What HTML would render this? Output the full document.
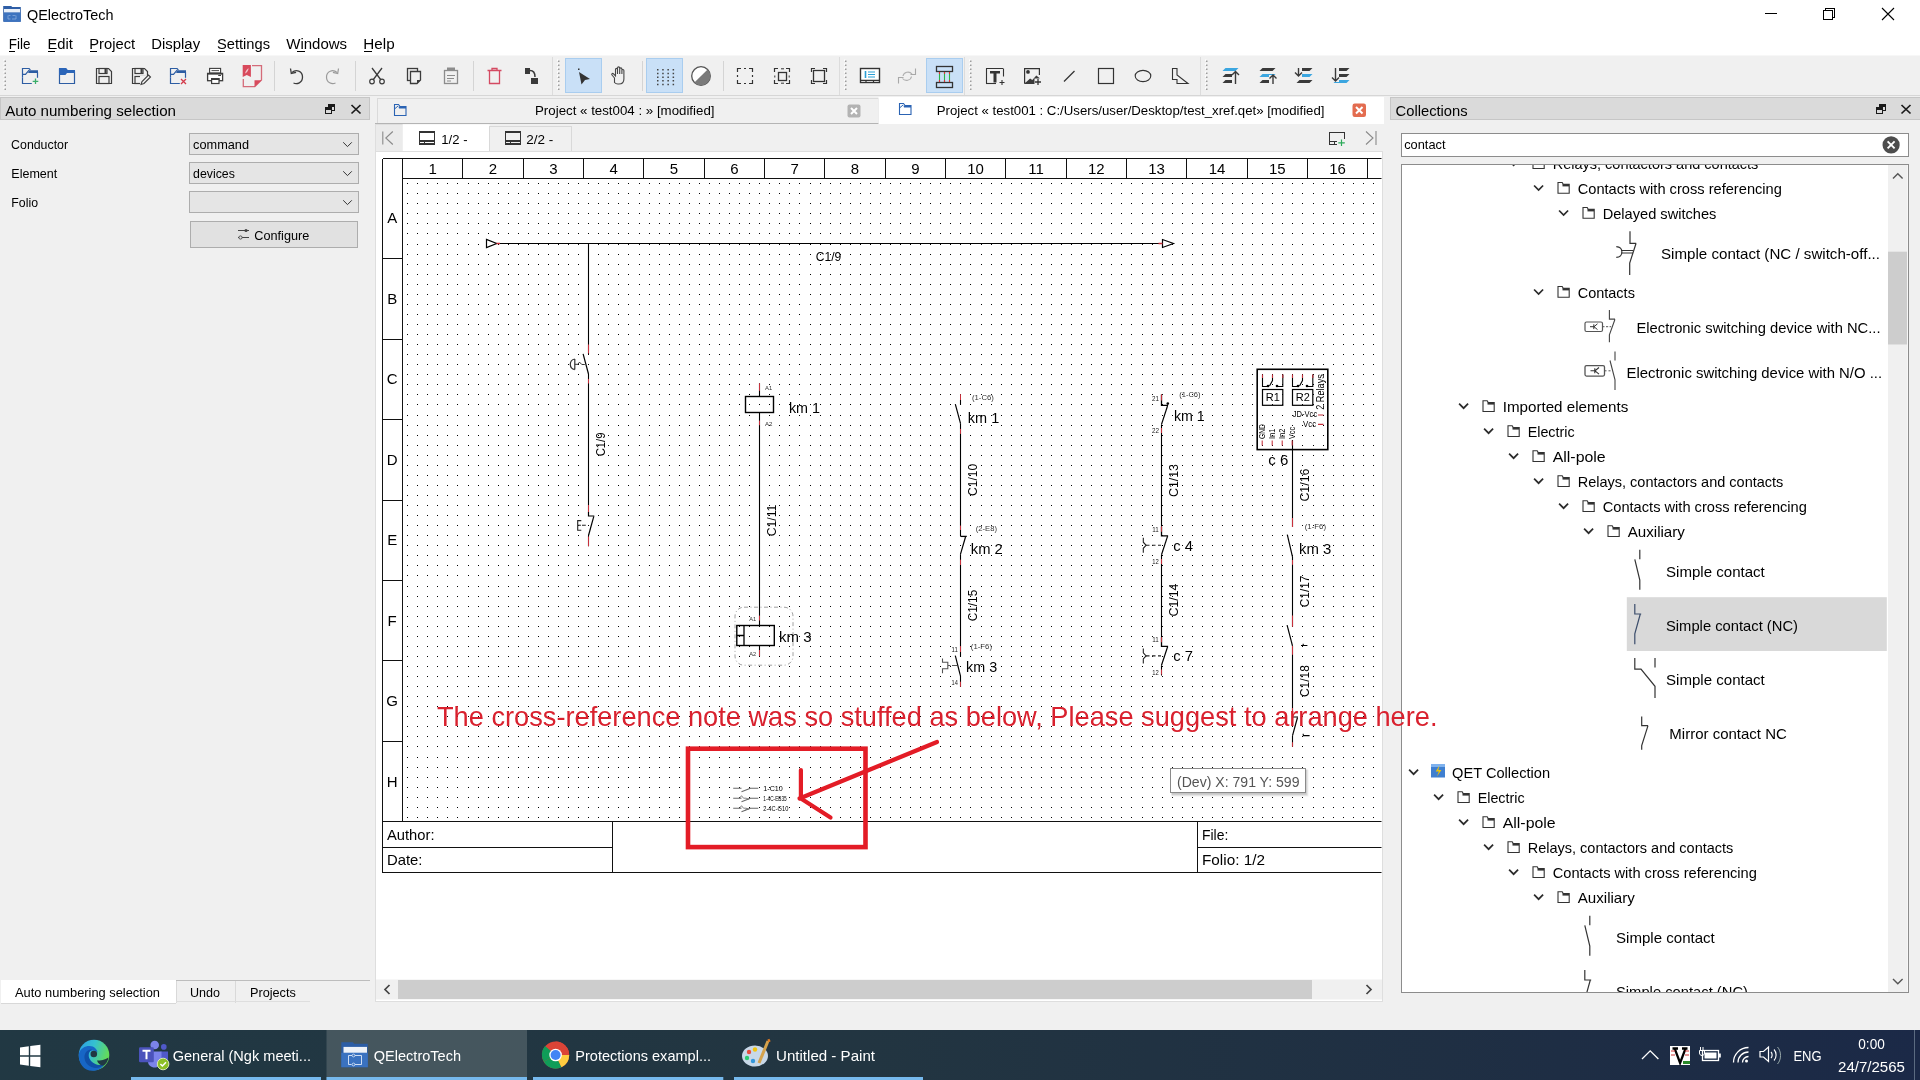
<!DOCTYPE html>
<html><head><meta charset="utf-8"><title>QElectroTech</title>
<style>
html,body{margin:0;padding:0;width:1920px;height:1080px;overflow:hidden;background:#f0f0f0;}
svg{display:block;font-family:"Liberation Sans",sans-serif;will-change:transform;}
.ce{shape-rendering:crispEdges}
</style></head><body>
<svg width="1920" height="1080" viewBox="0 0 1920 1080">
<rect x="0" y="0" width="1920" height="55" fill="#ffffff"/>
<path d="M3.2 21.8V6h8l1 1h8.6v14.8z" stroke="none" stroke-width="1" fill="#2e5ea6"/>
<rect x="4" y="9" width="16" height="3.6" fill="#e9eff8"/>
<rect x="4" y="12.6" width="16.6" height="9.2" fill="#3d73bf"/>
<path d="M8.5 15.5h2M12.5 15.5h3M8 15.5v3.5h2.5M12 19h4v-3.5" stroke="#8fb0e0" stroke-width="0.7" fill="none"/>
<text x="27" y="20" font-size="15" fill="#000" textLength="86.5" lengthAdjust="spacingAndGlyphs">QElectroTech</text>
<line x1="1765" y1="13.5" x2="1777" y2="13.5" stroke="#000" stroke-width="1" class="ce"/>
<rect x="1823.5" y="10.5" width="9" height="9" fill="none" stroke="#000" stroke-width="1" class="ce"/>
<path d="M1825.5 10.5v-2h9v9h-2" stroke="#000" stroke-width="1" fill="none" class="ce"/>
<path d="M1882 8l12 12M1894 8l-12 12" stroke="#000" stroke-width="1.1" fill="none"/>
<text x="8.7" y="49" font-size="15" fill="#000" textLength="21.7" lengthAdjust="spacingAndGlyphs">File</text>
<text x="47.4" y="49" font-size="15" fill="#000" textLength="25.4" lengthAdjust="spacingAndGlyphs">Edit</text>
<text x="89.3" y="49" font-size="15" fill="#000" textLength="45.8" lengthAdjust="spacingAndGlyphs">Project</text>
<text x="151.3" y="49" font-size="15" fill="#000" textLength="48.8" lengthAdjust="spacingAndGlyphs">Display</text>
<text x="217" y="49" font-size="15" fill="#000" textLength="53" lengthAdjust="spacingAndGlyphs">Settings</text>
<text x="286.3" y="49" font-size="15" fill="#000" textLength="60.8" lengthAdjust="spacingAndGlyphs">Windows</text>
<text x="363.3" y="49" font-size="15" fill="#000" textLength="31.3" lengthAdjust="spacingAndGlyphs">Help</text>
<line x1="8.5" y1="51.5" x2="15" y2="51.5" stroke="#000" stroke-width="1" class="ce"/>
<line x1="47.5" y1="51.5" x2="54.5" y2="51.5" stroke="#000" stroke-width="1" class="ce"/>
<line x1="89.5" y1="51.5" x2="96.5" y2="51.5" stroke="#000" stroke-width="1" class="ce"/>
<line x1="183.5" y1="51.5" x2="190" y2="51.5" stroke="#000" stroke-width="1" class="ce"/>
<line x1="217.5" y1="51.5" x2="224.5" y2="51.5" stroke="#000" stroke-width="1" class="ce"/>
<line x1="297" y1="51.5" x2="304.5" y2="51.5" stroke="#000" stroke-width="1" class="ce"/>
<line x1="363.5" y1="51.5" x2="371.5" y2="51.5" stroke="#000" stroke-width="1" class="ce"/>
<rect x="0" y="55" width="1920" height="41" fill="#f0f0f0"/>
<line x1="0" y1="55.5" x2="1920" y2="55.5" stroke="#f7f7f7" stroke-width="1" class="ce"/>
<line x1="0" y1="95.5" x2="1920" y2="95.5" stroke="#d6d6d6" stroke-width="1" class="ce"/>
<path d="M3.5 59.5h1.5v1.5h-1.5zM3.5 63.5h1.5v1.5h-1.5zM3.5 67.5h1.5v1.5h-1.5zM3.5 71.5h1.5v1.5h-1.5zM3.5 75.5h1.5v1.5h-1.5zM3.5 79.5h1.5v1.5h-1.5zM3.5 83.5h1.5v1.5h-1.5zM3.5 87.5h1.5v1.5h-1.5z" stroke="none" stroke-width="1" fill="#ffffff"/>
<path d="M4.5 60.5h1.5v1.5h-1.5zM4.5 64.5h1.5v1.5h-1.5zM4.5 68.5h1.5v1.5h-1.5zM4.5 72.5h1.5v1.5h-1.5zM4.5 76.5h1.5v1.5h-1.5zM4.5 80.5h1.5v1.5h-1.5zM4.5 84.5h1.5v1.5h-1.5zM4.5 88.5h1.5v1.5h-1.5z" stroke="none" stroke-width="1" fill="#9c9c9c"/>
<path d="M557.0 59.5h1.5v1.5h-1.5zM557.0 63.5h1.5v1.5h-1.5zM557.0 67.5h1.5v1.5h-1.5zM557.0 71.5h1.5v1.5h-1.5zM557.0 75.5h1.5v1.5h-1.5zM557.0 79.5h1.5v1.5h-1.5zM557.0 83.5h1.5v1.5h-1.5zM557.0 87.5h1.5v1.5h-1.5z" stroke="none" stroke-width="1" fill="#ffffff"/>
<path d="M558.0 60.5h1.5v1.5h-1.5zM558.0 64.5h1.5v1.5h-1.5zM558.0 68.5h1.5v1.5h-1.5zM558.0 72.5h1.5v1.5h-1.5zM558.0 76.5h1.5v1.5h-1.5zM558.0 80.5h1.5v1.5h-1.5zM558.0 84.5h1.5v1.5h-1.5zM558.0 88.5h1.5v1.5h-1.5z" stroke="none" stroke-width="1" fill="#9c9c9c"/>
<path d="M844.0 59.5h1.5v1.5h-1.5zM844.0 63.5h1.5v1.5h-1.5zM844.0 67.5h1.5v1.5h-1.5zM844.0 71.5h1.5v1.5h-1.5zM844.0 75.5h1.5v1.5h-1.5zM844.0 79.5h1.5v1.5h-1.5zM844.0 83.5h1.5v1.5h-1.5zM844.0 87.5h1.5v1.5h-1.5z" stroke="none" stroke-width="1" fill="#ffffff"/>
<path d="M845.0 60.5h1.5v1.5h-1.5zM845.0 64.5h1.5v1.5h-1.5zM845.0 68.5h1.5v1.5h-1.5zM845.0 72.5h1.5v1.5h-1.5zM845.0 76.5h1.5v1.5h-1.5zM845.0 80.5h1.5v1.5h-1.5zM845.0 84.5h1.5v1.5h-1.5zM845.0 88.5h1.5v1.5h-1.5z" stroke="none" stroke-width="1" fill="#9c9c9c"/>
<path d="M969.0 59.5h1.5v1.5h-1.5zM969.0 63.5h1.5v1.5h-1.5zM969.0 67.5h1.5v1.5h-1.5zM969.0 71.5h1.5v1.5h-1.5zM969.0 75.5h1.5v1.5h-1.5zM969.0 79.5h1.5v1.5h-1.5zM969.0 83.5h1.5v1.5h-1.5zM969.0 87.5h1.5v1.5h-1.5z" stroke="none" stroke-width="1" fill="#ffffff"/>
<path d="M970.0 60.5h1.5v1.5h-1.5zM970.0 64.5h1.5v1.5h-1.5zM970.0 68.5h1.5v1.5h-1.5zM970.0 72.5h1.5v1.5h-1.5zM970.0 76.5h1.5v1.5h-1.5zM970.0 80.5h1.5v1.5h-1.5zM970.0 84.5h1.5v1.5h-1.5zM970.0 88.5h1.5v1.5h-1.5z" stroke="none" stroke-width="1" fill="#9c9c9c"/>
<path d="M1205.0 59.5h1.5v1.5h-1.5zM1205.0 63.5h1.5v1.5h-1.5zM1205.0 67.5h1.5v1.5h-1.5zM1205.0 71.5h1.5v1.5h-1.5zM1205.0 75.5h1.5v1.5h-1.5zM1205.0 79.5h1.5v1.5h-1.5zM1205.0 83.5h1.5v1.5h-1.5zM1205.0 87.5h1.5v1.5h-1.5z" stroke="none" stroke-width="1" fill="#ffffff"/>
<path d="M1206.0 60.5h1.5v1.5h-1.5zM1206.0 64.5h1.5v1.5h-1.5zM1206.0 68.5h1.5v1.5h-1.5zM1206.0 72.5h1.5v1.5h-1.5zM1206.0 76.5h1.5v1.5h-1.5zM1206.0 80.5h1.5v1.5h-1.5zM1206.0 84.5h1.5v1.5h-1.5zM1206.0 88.5h1.5v1.5h-1.5z" stroke="none" stroke-width="1" fill="#9c9c9c"/>
<line x1="552.5" y1="57" x2="552.5" y2="95" stroke="#dcdcdc" stroke-width="1" class="ce"/>
<line x1="839.5" y1="57" x2="839.5" y2="95" stroke="#dcdcdc" stroke-width="1" class="ce"/>
<line x1="964.5" y1="57" x2="964.5" y2="95" stroke="#dcdcdc" stroke-width="1" class="ce"/>
<line x1="1200.5" y1="57" x2="1200.5" y2="95" stroke="#dcdcdc" stroke-width="1" class="ce"/>
<line x1="274.5" y1="61" x2="274.5" y2="91" stroke="#d4d4d4" stroke-width="1" class="ce"/>
<line x1="355.5" y1="61" x2="355.5" y2="91" stroke="#d4d4d4" stroke-width="1" class="ce"/>
<line x1="473.5" y1="61" x2="473.5" y2="91" stroke="#d4d4d4" stroke-width="1" class="ce"/>
<line x1="642.5" y1="61" x2="642.5" y2="91" stroke="#d4d4d4" stroke-width="1" class="ce"/>
<line x1="723.5" y1="61" x2="723.5" y2="91" stroke="#d4d4d4" stroke-width="1" class="ce"/>
<rect x="565.5" y="58.5" width="36" height="34" fill="#c9e0f7" stroke="#a9cdef" stroke-width="1" class="ce"/>
<rect x="646.5" y="58.5" width="36" height="34" fill="#c9e0f7" stroke="#a9cdef" stroke-width="1" class="ce"/>
<rect x="926.5" y="58.5" width="36" height="34" fill="#c9e0f7" stroke="#a9cdef" stroke-width="1" class="ce"/>
<path d="M22.5 77.8V83.5h9.3" stroke="#2d5da3" stroke-width="1.2" fill="none"/>
<path d="M22.5 77.8V68.5h6.6l1.3 1.6" stroke="#2d5da3" stroke-width="1.2" fill="none"/>
<path d="M22.5 74.4h3l3.6-4.2" stroke="#2d5da3" stroke-width="1.2" fill="none"/>
<path d="M29.5 70.2H38v2.7H28z" stroke="none" stroke-width="1" fill="#2d5da3"/>
<path d="M37.5 72v5.8" stroke="#2d5da3" stroke-width="1.2" fill="none"/>
<path d="M35.5 78.5v5.6M32.7 81.3h5.6" stroke="#3aae6a" stroke-width="1.3" fill="none"/>
<path d="M59.5 68.5V83.5h15V71.5" stroke="#2d5da3" stroke-width="1.2" fill="none"/>
<path d="M59 68h7.2l1.6 2.1H75v2.8H67l-1.6 2H59z" stroke="none" stroke-width="1" fill="#2b65b8"/>
<path d="M96.5 68.5h12l3 3v12h-15z" stroke="#3c3c3c" stroke-width="1.2" fill="none"/>
<rect x="99" y="68.5" width="8" height="5" fill="none" stroke="#3c3c3c" stroke-width="1.2"/>
<rect x="104.5" y="69" width="2" height="4" fill="#3c3c3c"/>
<rect x="99" y="76.5" width="10" height="7" fill="none" stroke="#3c3c3c" stroke-width="1.2"/>
<path d="M132.5 68.5h12l3 3v12h-15z" stroke="#3c3c3c" stroke-width="1.2" fill="none"/>
<rect x="135" y="68.5" width="8" height="5" fill="none" stroke="#3c3c3c" stroke-width="1.2"/>
<rect x="140.5" y="69" width="2" height="4" fill="#3c3c3c"/>
<rect x="135" y="76.5" width="10" height="7" fill="none" stroke="#3c3c3c" stroke-width="1.2"/>
<rect x="140" y="76" width="11" height="9" fill="#f0f0f0"/>
<path d="M141 84.5l1-3 6.5-6.5 2 2-6.5 6.5z" stroke="#3c3c3c" stroke-width="1.1" fill="#f0f0f0"/>
<path d="M170.5 77.8V83.5h9.3" stroke="#2d5da3" stroke-width="1.2" fill="none"/>
<path d="M170.5 77.8V68.5h6.6l1.3 1.6" stroke="#2d5da3" stroke-width="1.2" fill="none"/>
<path d="M170.5 74.4h3l3.6-4.2" stroke="#2d5da3" stroke-width="1.2" fill="none"/>
<path d="M177.5 70.2H186v2.7H176z" stroke="none" stroke-width="1" fill="#2d5da3"/>
<path d="M185.5 72v5.8" stroke="#2d5da3" stroke-width="1.2" fill="none"/>
<path d="M181 79l5 5M186 79l-5 5" stroke="#d33a4a" stroke-width="1.3" fill="none"/>
<rect x="209.6" y="68.4" width="11" height="4.6" fill="#fff" stroke="#3c3c3c" stroke-width="1.1"/>
<line x1="211.5" y1="70.6" x2="219" y2="70.6" stroke="#3c3c3c" stroke-width="0.9"/>
<rect x="207.6" y="73.4" width="15" height="7.3" fill="#fff" stroke="#3c3c3c" stroke-width="1.3"/>
<rect x="208" y="73" width="14" height="1.6" fill="#3c3c3c"/>
<rect x="218.2" y="75" width="2.8" height="1" fill="#3c3c3c"/>
<rect x="211.6" y="78.7" width="7.4" height="4.8" fill="#fff" stroke="#3c3c3c" stroke-width="1.2"/>
<rect x="211" y="78.2" width="8.5" height="1.8" fill="#3c3c3c"/>
<path d="M243.3 79v7.7h11.5l6.7-6.7V65.6h-9.5" stroke="#d46b79" stroke-width="1.3" fill="none"/>
<path d="M242.7 65h8.2v12.1l-4.1-2.1-4.1 2.1z" stroke="none" stroke-width="1" fill="#d84a5c"/>
<path d="M245 73.5c0.5-2.5 2-4.5 3.7-5.2-0.4 2.4-1.8 4.4-3.7 5.2z" stroke="none" stroke-width="1" fill="#f4c6cc"/>
<path d="M254.5 87V80.3h7z" stroke="none" stroke-width="1" fill="#d84a5c"/>
<path d="M292 72.5c4-3.5 10.5-1.5 10.5 4.5s-5.5 7.5-9 6" stroke="#3c3c3c" stroke-width="1.3" fill="none"/>
<path d="M290.5 68.5l0.8 5 4.8-1.2" stroke="#3c3c3c" stroke-width="1.3" fill="none"/>
<path d="M337 72.5c-4-3.5-10.5-1.5-10.5 4.5s5.5 7.5 9 6" stroke="#9a9a9a" stroke-width="1.2" fill="none"/>
<path d="M338.5 68.5l-0.8 5-4.8-1.2" stroke="#9a9a9a" stroke-width="1.2" fill="none"/>
<path d="M372 68l9 12M382 68l-9 12" stroke="#3c3c3c" stroke-width="1.3" fill="none"/>
<circle cx="372" cy="81.5" r="2.3" fill="none" stroke="#3c3c3c" stroke-width="1.2"/>
<circle cx="382" cy="81.5" r="2.3" fill="none" stroke="#3c3c3c" stroke-width="1.2"/>
<rect x="407.5" y="68.5" width="10" height="12" fill="none" stroke="#3c3c3c" stroke-width="1.3"/>
<path d="M410.5 71.5h10v8.5l-3.5 3.5h-6.5z" stroke="#3c3c3c" stroke-width="1.3" fill="#f0f0f0"/>
<path d="M417 83.5v-3.5h3.5z" stroke="none" stroke-width="1" fill="#3c3c3c"/>
<rect x="444.5" y="70.5" width="13" height="13" fill="none" stroke="#8c8c8c" stroke-width="1.3"/>
<rect x="447" y="67.5" width="8" height="3.5" fill="#8c8c8c"/>
<path d="M447 75.5h8M447 78.5h7M447 81h4" stroke="#8c8c8c" stroke-width="1" fill="none"/>
<path d="M487.5 70.5h14M492 70.5v-2h5v2M489.5 71v12.5h10V71" stroke="#d44a62" stroke-width="1.3" fill="none"/>
<rect x="525" y="68" width="5" height="6" fill="#3a3a3a"/>
<rect x="531" y="78" width="7" height="6" fill="#3a3a3a"/>
<path d="M530 70.5c3 0 5 2 5 6.5" stroke="#3a3a3a" stroke-width="1.5" fill="none"/>
<path d="M579 72l11 7-5 1-3.5 4.5z" stroke="none" stroke-width="1" fill="#333"/>
<rect x="578" y="68.5" width="1.5" height="1.5" fill="#333"/>
<path d="M614.5 78l-2.5-3c-0.8-1 0.5-2.2 1.5-1.2l2 2V69.5c0-1.5 2-1.5 2 0v4.5-6c0-1.5 2.2-1.5 2.2 0v6-5c0-1.5 2.2-1.5 2.2 0v5-3.5c0-1.4 2-1.4 2 0v8.5c0 3-2 5-5 5h-1c-1.6 0-2.5-0.5-3.4-1.5z" stroke="#444" stroke-width="1.1" fill="none"/>
<path d="M657.0 69.0h1.5v1.5h-1.5zM657.0 72.7h1.5v1.5h-1.5zM657.0 76.4h1.5v1.5h-1.5zM657.0 80.1h1.5v1.5h-1.5zM657.0 83.8h1.5v1.5h-1.5zM662.2 69.0h1.5v1.5h-1.5zM662.2 72.7h1.5v1.5h-1.5zM662.2 76.4h1.5v1.5h-1.5zM662.2 80.1h1.5v1.5h-1.5zM662.2 83.8h1.5v1.5h-1.5zM667.4 69.0h1.5v1.5h-1.5zM667.4 72.7h1.5v1.5h-1.5zM667.4 76.4h1.5v1.5h-1.5zM667.4 80.1h1.5v1.5h-1.5zM667.4 83.8h1.5v1.5h-1.5zM672.6 69.0h1.5v1.5h-1.5zM672.6 72.7h1.5v1.5h-1.5zM672.6 76.4h1.5v1.5h-1.5zM672.6 80.1h1.5v1.5h-1.5zM672.6 83.8h1.5v1.5h-1.5z" stroke="none" stroke-width="1" fill="#444"/>
<circle cx="701" cy="76" r="9.3" fill="#fff" stroke="#555" stroke-width="1.3"/>
<path d="M707.6 69.4A9.3 9.3 0 0 1 694.4 82.6z" stroke="none" stroke-width="1" fill="#7a7a7a"/>
<path d="M737.5 72V68.5h3.5M749 68.5h3.5v3.5M752.5 80v3.5h-3.5M741 83.5H737.5v-3.5" stroke="#333" stroke-width="1.2" fill="none"/>
<path d="M744 68.5h2M744 83.5h2M737.5 75h0v2M752.5 75v2" stroke="#333" stroke-width="1.2" fill="none"/>
<path d="M774.5 72V68.5h3.5M786 68.5h3.5v3.5M789.5 80v3.5h-3.5M778 83.5H774.5v-3.5" stroke="#333" stroke-width="1.2" fill="none"/>
<rect x="778.5" y="72.5" width="8" height="8" fill="none" stroke="#333" stroke-width="1.3"/>
<path d="M781 68.8h3M781 83.2h3M774.8 75.5v2M789.2 75.5v2" stroke="#333" stroke-width="1" fill="none"/>
<path d="M811.5 72V68.5h3.5M823 68.5h3.5v3.5M826.5 80v3.5h-3.5M815 83.5H811.5v-3.5" stroke="#333" stroke-width="1.2" fill="none"/>
<rect x="813.5" y="70.5" width="11" height="11" fill="none" stroke="#333" stroke-width="1.3"/>
<rect x="860.5" y="68.5" width="19" height="14" fill="#ffffff" stroke="#333" stroke-width="1.4"/>
<path d="M860.5 80.3h19M866 80.3v2.2M873.5 80.3v2.2" stroke="#333" stroke-width="1.2" fill="none"/>
<path d="M865.5 71v7" stroke="#2a9fd6" stroke-width="1.6" fill="none"/>
<path d="M868 72h7M868 74.5h7M868 77h7" stroke="#2a9fd6" stroke-width="1.1" fill="none"/>
<path d="M898.5 83.5v-6h5M915.5 68.5v6h-5" stroke="#a8a8a8" stroke-width="1.1" fill="none"/>
<path d="M903 76a5 4.5 0 0 1 9-2M911.5 76.5a5 4.5 0 0 1-9 2" stroke="#b0b0b0" stroke-width="1.1" fill="none"/>
<rect x="936.5" y="66.5" width="16" height="5" fill="none" stroke="#333" stroke-width="1.3"/>
<rect x="936.5" y="82.5" width="16" height="5" fill="none" stroke="#333" stroke-width="1.3"/>
<path d="M939.5 72v10" stroke="#2cb34a" stroke-width="1.1" fill="none"/>
<path d="M939.5 72v2M939.5 80v2" stroke="#d33" stroke-width="1.1" fill="none"/>
<path d="M944.5 72v10" stroke="#2cb34a" stroke-width="1.1" fill="none"/>
<path d="M944.5 72v2M944.5 80v2" stroke="#d33" stroke-width="1.1" fill="none"/>
<path d="M949.5 72v10" stroke="#2cb34a" stroke-width="1.1" fill="none"/>
<path d="M949.5 72v2M949.5 80v2" stroke="#d33" stroke-width="1.1" fill="none"/>
<path d="M986.5 68.5v15M986 68.5h17M1003.5 68.5v8" stroke="#333" stroke-width="1.1" fill="none"/>
<path d="M990 71h10v2.5h-3.5v9h-3v-9h-3.5z" stroke="none" stroke-width="1" fill="#333"/>
<path d="M999.5 82.5h5M1002 80v5" stroke="#333" stroke-width="1.1" fill="none"/>
<path d="M986 83.5h10" stroke="#333" stroke-width="1.1" fill="none"/>
<path d="M1024.6 83.4V68.6h14.8v6.5M1024.6 83.4h8" stroke="#333" stroke-width="1.2" fill="none"/>
<circle cx="1028" cy="71.9" r="1.9" fill="#333"/>
<path d="M1024.6 83.6l5.5-5 2.2 1.4 4-4.5 3.2 2.6V84h-15z" stroke="none" stroke-width="1" fill="#3a3a3a"/>
<rect x="1034.5" y="78.5" width="7" height="7" fill="#f0f0f0"/>
<path d="M1038 79v6M1035 82h6" stroke="#333" stroke-width="1.3" fill="none"/>
<path d="M1064 81.5l10.5-10.5" stroke="#333" stroke-width="1.2" fill="none"/>
<rect x="1098.5" y="68.5" width="15" height="15" fill="none" stroke="#333" stroke-width="1.2"/>
<ellipse cx="1143" cy="76" rx="7.8" ry="5.6" fill="none" stroke="#333" stroke-width="1.1"/>
<path d="M1172.5 68.5h4.5v6.5l11 8.5h-11v-4h-4.5z" stroke="#333" stroke-width="1.1" fill="none"/>
<path d="M1225.5 68h13l-3 3h-13z" stroke="none" stroke-width="1" fill="#3ba6e0"/>
<path d="M1225.5 74h13l-3 3h-13z" stroke="none" stroke-width="1" fill="#3a3a3a"/>
<path d="M1225.5 80h13l-3 3h-13z" stroke="none" stroke-width="1" fill="#3a3a3a"/>
<rect x="1232" y="72" width="8" height="12" fill="#f0f0f0"/>
<path d="M1235.5 84v-12M1232 75l3.5-3.5 3.5 3.5" stroke="#3a3a3a" stroke-width="1.4" fill="none"/>
<path d="M1262.5 68h13l-3 3h-13z" stroke="none" stroke-width="1" fill="#3a3a3a"/>
<path d="M1262.5 74h13l-3 3h-13z" stroke="none" stroke-width="1" fill="#3ba6e0"/>
<path d="M1262.5 80h13l-3 3h-13z" stroke="none" stroke-width="1" fill="#3a3a3a"/>
<rect x="1269" y="75" width="8" height="9" fill="#f0f0f0"/>
<path d="M1273 84v-8M1269.5 78.5l3.5-3.5 3.5 3.5" stroke="#3a3a3a" stroke-width="1.4" fill="none"/>
<path d="M1299.5 68h13l-3 3h-13z" stroke="none" stroke-width="1" fill="#3a3a3a"/>
<path d="M1299.5 74h13l-3 3h-13z" stroke="none" stroke-width="1" fill="#3ba6e0"/>
<path d="M1299.5 80h13l-3 3h-13z" stroke="none" stroke-width="1" fill="#3a3a3a"/>
<rect x="1295" y="68" width="7" height="10" fill="#f0f0f0"/>
<path d="M1298.5 68v8M1295 72.5l3.5 3.5 3.5-3.5" stroke="#3a3a3a" stroke-width="1.4" fill="none"/>
<path d="M1336.5 68h13l-3 3h-13z" stroke="none" stroke-width="1" fill="#3a3a3a"/>
<path d="M1336.5 74h13l-3 3h-13z" stroke="none" stroke-width="1" fill="#3a3a3a"/>
<path d="M1336.5 80h13l-3 3h-13z" stroke="none" stroke-width="1" fill="#3ba6e0"/>
<rect x="1332" y="68" width="7" height="14" fill="#f0f0f0"/>
<path d="M1335.5 68v13M1332 77.5l3.5 3.5 3.5-3.5" stroke="#3a3a3a" stroke-width="1.4" fill="none"/>
<rect x="0" y="96" width="372" height="934" fill="#f0f0f0"/>
<rect x="0.5" y="97.5" width="369" height="22" fill="#dadada" stroke="#c6c6c6" stroke-width="1" class="ce"/>
<text x="5.2" y="115.5" font-size="15" fill="#000" textLength="170.8" lengthAdjust="spacingAndGlyphs">Auto numbering selection</text>
<g class="ce">
<rect x="328.5" y="104.5" width="6" height="6" fill="none" stroke="#1a1a1a" stroke-width="1.3"/>
<rect x="325.5" y="107.5" width="6" height="6" fill="#dadada" stroke="#1a1a1a" stroke-width="1.3"/>
<rect x="326" y="108" width="5" height="1.6" fill="#1a1a1a"/>
<rect x="329" y="105" width="5" height="1.6" fill="#1a1a1a"/>
</g>
<path d="M351.5 105l9 8.5M360.5 105l-9 8.5" stroke="#1a1a1a" stroke-width="1.7" fill="none"/>
<text x="11.1" y="149.1" font-size="12.5" fill="#000" textLength="57" lengthAdjust="spacingAndGlyphs">Conductor</text>
<text x="11.3" y="178.3" font-size="12.5" fill="#000" textLength="46" lengthAdjust="spacingAndGlyphs">Element</text>
<text x="11.3" y="207.2" font-size="12.5" fill="#000" textLength="26.7" lengthAdjust="spacingAndGlyphs">Folio</text>
<rect x="189.5" y="133.5" width="169" height="21" fill="#e5e5e5" stroke="#adadad" stroke-width="1" class="ce"/>
<text x="193.1" y="149.3" font-size="12.8" fill="#000" textLength="55.9" lengthAdjust="spacingAndGlyphs">command</text>
<path d="M343.2 142.3l4.3 4.3 4.3-4.3" stroke="#333" stroke-width="1" fill="none"/>
<rect x="189.5" y="162.5" width="169" height="21" fill="#e5e5e5" stroke="#adadad" stroke-width="1" class="ce"/>
<text x="193.1" y="178.3" font-size="12.8" fill="#000" textLength="41.8" lengthAdjust="spacingAndGlyphs">devices</text>
<path d="M343.2 171.3l4.3 4.3 4.3-4.3" stroke="#333" stroke-width="1" fill="none"/>
<rect x="189.5" y="191.5" width="169" height="21" fill="#e5e5e5" stroke="#adadad" stroke-width="1" class="ce"/>
<path d="M343.2 200.3l4.3 4.3 4.3-4.3" stroke="#333" stroke-width="1" fill="none"/>
<rect x="190.5" y="221.5" width="167" height="26" fill="#e1e1e1" stroke="#adadad" stroke-width="1" class="ce"/>
<path d="M238 230.5h11M238 237.5h11" stroke="#444" stroke-width="1" fill="none"/>
<circle cx="246" cy="230.5" r="1.6" fill="#444"/>
<circle cx="240.5" cy="237.5" r="1.6" fill="#e1e1e1" stroke="#444" stroke-width="0.9"/>
<text x="254.3" y="240.3" font-size="13" fill="#000" textLength="55" lengthAdjust="spacingAndGlyphs">Configure</text>
<rect x="1" y="980" width="175" height="23.5" fill="#ffffff"/>
<line x1="176" y1="980.5" x2="370" y2="980.5" stroke="#bdbdbd" stroke-width="1" class="ce"/>
<line x1="176.5" y1="980.5" x2="176.5" y2="1003" stroke="#d9d9d9" stroke-width="1" class="ce"/>
<line x1="235.5" y1="980.5" x2="235.5" y2="1003" stroke="#d9d9d9" stroke-width="1" class="ce"/>
<line x1="176" y1="1001.5" x2="309.5" y2="1001.5" stroke="#dedede" stroke-width="1" class="ce"/>
<line x1="1" y1="1003.5" x2="176" y2="1003.5" stroke="#d8d8d8" stroke-width="1" class="ce"/>
<text x="15" y="996.8" font-size="13" fill="#000" textLength="145" lengthAdjust="spacingAndGlyphs">Auto numbering selection</text>
<text x="190" y="996.5" font-size="13" fill="#000" textLength="30" lengthAdjust="spacingAndGlyphs">Undo</text>
<text x="250" y="996.5" font-size="13" fill="#000" textLength="45.8" lengthAdjust="spacingAndGlyphs">Projects</text>
<rect x="372" y="96" width="18" height="934" fill="#f0f0f0"/>
<rect x="375.5" y="97" width="1009" height="27" fill="#f0f0f0"/>
<rect x="377.5" y="98.5" width="501" height="25" fill="#f0f0f0" stroke="#dadada" stroke-width="1" class="ce"/>
<line x1="375" y1="123.5" x2="878.5" y2="123.5" stroke="#b4b4b4" stroke-width="1" class="ce"/>
<rect x="878.5" y="97" width="506" height="27" fill="#ffffff"/>
<path d="M394.5 115.5V104.5h4l1.5 2h6v9z" stroke="#2a63b3" stroke-width="1.1" fill="none"/>
<path d="M398.5 106.5h7.5v2h-7z" stroke="none" stroke-width="1" fill="#2a63b3"/>
<path d="M394.5 109l3.5-3" stroke="#2a63b3" stroke-width="1" fill="none"/>
<text x="535" y="115.1" font-size="13.5" fill="#000" textLength="179.5" lengthAdjust="spacingAndGlyphs">Project « test004 : » [modified]</text>
<rect x="847.5" y="104.5" width="13" height="13" fill="#b3b3b3" rx="2"/>
<path d="M851 108l6 6M857 108l-6 6" stroke="#fff" stroke-width="2" fill="none"/>
<path d="M899.5 114.5V103.5h4l1.5 2h6v9z" stroke="#2a63b3" stroke-width="1.1" fill="none"/>
<path d="M903.5 105.5h7.5v2h-7z" stroke="none" stroke-width="1" fill="#2a63b3"/>
<path d="M899.5 108l3.5-3" stroke="#2a63b3" stroke-width="1" fill="none"/>
<text x="936.7" y="115.1" font-size="13.5" fill="#000" textLength="387.8" lengthAdjust="spacingAndGlyphs">Project « test001 : C:/Users/user/Desktop/test_xref.qet» [modified]</text>
<rect x="1352.5" y="103.5" width="13.5" height="13.5" fill="#e36c4f" rx="2.2"/>
<path d="M1356 107l6.5 6.5M1362.5 107l-6.5 6.5" stroke="#fff" stroke-width="2" fill="none"/>
<rect x="375.5" y="124" width="1009" height="27.5" fill="#f0f0f0"/>
<rect x="375.5" y="124.5" width="27" height="27" fill="#ebebeb" stroke="#dedede" stroke-width="1" class="ce"/>
<path d="M382.8 131.5v13M392.8 131.5l-7 6.5 7 6.5" stroke="#8a8a8a" stroke-width="1.1" fill="none"/>
<rect x="402.5" y="124.5" width="87" height="27" fill="#ffffff"/>
<rect x="489.5" y="126.5" width="82" height="25" fill="#f0f0f0" stroke="#d9d9d9" stroke-width="1" class="ce"/>
<rect x="419.5" y="132.0" width="15" height="12" fill="none" stroke="#333" stroke-width="1.1" class="ce"/>
<path d="M419.5 141.0h15M424.5 141.0v3" stroke="#333" stroke-width="1.1" fill="none" class="ce"/>
<text x="441.3" y="143.8" font-size="13" fill="#000" textLength="26.2" lengthAdjust="spacingAndGlyphs">1/2 -</text>
<rect x="505.5" y="132.0" width="15" height="12" fill="none" stroke="#333" stroke-width="1.1" class="ce"/>
<path d="M505.5 141.0h15M510.5 141.0v3" stroke="#333" stroke-width="1.1" fill="none" class="ce"/>
<text x="526.3" y="143.8" font-size="13" fill="#000" textLength="27" lengthAdjust="spacingAndGlyphs">2/2 -</text>
<rect x="1329.5" y="132.5" width="15" height="12" fill="none" stroke="#333" stroke-width="1.1" class="ce"/>
<path d="M1329.5 141.5h15M1334.5 141.5v3" stroke="#333" stroke-width="1.1" fill="none" class="ce"/>
<rect x="1337" y="139" width="9" height="8" fill="#f0f0f0"/>
<path d="M1341.5 139.5v6.5M1338.3 142.8h6.5" stroke="#2cab5a" stroke-width="1.2" fill="none"/>
<path d="M1376 131v14M1366 131.5l7 6.5-7 6.5" stroke="#8a8a8a" stroke-width="1.1" fill="none"/>
<rect x="375.5" y="151.5" width="1006.5" height="850" fill="#ffffff" stroke="#dedede" stroke-width="1" class="ce"/>
<defs><clipPath id="vclip"><rect x="376" y="152" width="1005.5" height="827"/></clipPath></defs>
<g clip-path="url(#vclip)">
<path d="M407 183.5h1m9 0h1m9 0h1m9 0h1m9 0h1m9 0h1m10 0h1m9 0h1m9 0h1m9 0h1m9 0h1m9 0h1m9 0h1m9 0h1m9 0h1m9 0h1m9 0h1m9 0h1m9 0h1m9 0h1m9 0h1m9 0h1m9 0h1m10 0h1m9 0h1m9 0h1m9 0h1m9 0h1m9 0h1m9 0h1m9 0h1m9 0h1m9 0h1m9 0h1m9 0h1m9 0h1m9 0h1m9 0h1m9 0h1m9 0h1m10 0h1m9 0h1m9 0h1m9 0h1m9 0h1m9 0h1m9 0h1m9 0h1m9 0h1m9 0h1m9 0h1m9 0h1m9 0h1m9 0h1m9 0h1m9 0h1m9 0h1m10 0h1m9 0h1m9 0h1m9 0h1m9 0h1m9 0h1m9 0h1m9 0h1m9 0h1m9 0h1m9 0h1m9 0h1m9 0h1m9 0h1m9 0h1m9 0h1m10 0h1m9 0h1m9 0h1m9 0h1m9 0h1m9 0h1m9 0h1m9 0h1m9 0h1m9 0h1m9 0h1m9 0h1m9 0h1m9 0h1m9 0h1m9 0h1m9 0h1m10 0h1m9 0h1m9 0h1m9 0h1m9 0h1m9 0h1m9 0h1M407 193.5h1m9 0h1m9 0h1m9 0h1m9 0h1m9 0h1m10 0h1m9 0h1m9 0h1m9 0h1m9 0h1m9 0h1m9 0h1m9 0h1m9 0h1m9 0h1m9 0h1m9 0h1m9 0h1m9 0h1m9 0h1m9 0h1m9 0h1m10 0h1m9 0h1m9 0h1m9 0h1m9 0h1m9 0h1m9 0h1m9 0h1m9 0h1m9 0h1m9 0h1m9 0h1m9 0h1m9 0h1m9 0h1m9 0h1m9 0h1m10 0h1m9 0h1m9 0h1m9 0h1m9 0h1m9 0h1m9 0h1m9 0h1m9 0h1m9 0h1m9 0h1m9 0h1m9 0h1m9 0h1m9 0h1m9 0h1m9 0h1m10 0h1m9 0h1m9 0h1m9 0h1m9 0h1m9 0h1m9 0h1m9 0h1m9 0h1m9 0h1m9 0h1m9 0h1m9 0h1m9 0h1m9 0h1m9 0h1m10 0h1m9 0h1m9 0h1m9 0h1m9 0h1m9 0h1m9 0h1m9 0h1m9 0h1m9 0h1m9 0h1m9 0h1m9 0h1m9 0h1m9 0h1m9 0h1m9 0h1m10 0h1m9 0h1m9 0h1m9 0h1m9 0h1m9 0h1m9 0h1M407 203.5h1m9 0h1m9 0h1m9 0h1m9 0h1m9 0h1m10 0h1m9 0h1m9 0h1m9 0h1m9 0h1m9 0h1m9 0h1m9 0h1m9 0h1m9 0h1m9 0h1m9 0h1m9 0h1m9 0h1m9 0h1m9 0h1m9 0h1m10 0h1m9 0h1m9 0h1m9 0h1m9 0h1m9 0h1m9 0h1m9 0h1m9 0h1m9 0h1m9 0h1m9 0h1m9 0h1m9 0h1m9 0h1m9 0h1m9 0h1m10 0h1m9 0h1m9 0h1m9 0h1m9 0h1m9 0h1m9 0h1m9 0h1m9 0h1m9 0h1m9 0h1m9 0h1m9 0h1m9 0h1m9 0h1m9 0h1m9 0h1m10 0h1m9 0h1m9 0h1m9 0h1m9 0h1m9 0h1m9 0h1m9 0h1m9 0h1m9 0h1m9 0h1m9 0h1m9 0h1m9 0h1m9 0h1m9 0h1m10 0h1m9 0h1m9 0h1m9 0h1m9 0h1m9 0h1m9 0h1m9 0h1m9 0h1m9 0h1m9 0h1m9 0h1m9 0h1m9 0h1m9 0h1m9 0h1m9 0h1m10 0h1m9 0h1m9 0h1m9 0h1m9 0h1m9 0h1m9 0h1M407 213.5h1m9 0h1m9 0h1m9 0h1m9 0h1m9 0h1m10 0h1m9 0h1m9 0h1m9 0h1m9 0h1m9 0h1m9 0h1m9 0h1m9 0h1m9 0h1m9 0h1m9 0h1m9 0h1m9 0h1m9 0h1m9 0h1m9 0h1m10 0h1m9 0h1m9 0h1m9 0h1m9 0h1m9 0h1m9 0h1m9 0h1m9 0h1m9 0h1m9 0h1m9 0h1m9 0h1m9 0h1m9 0h1m9 0h1m9 0h1m10 0h1m9 0h1m9 0h1m9 0h1m9 0h1m9 0h1m9 0h1m9 0h1m9 0h1m9 0h1m9 0h1m9 0h1m9 0h1m9 0h1m9 0h1m9 0h1m9 0h1m10 0h1m9 0h1m9 0h1m9 0h1m9 0h1m9 0h1m9 0h1m9 0h1m9 0h1m9 0h1m9 0h1m9 0h1m9 0h1m9 0h1m9 0h1m9 0h1m10 0h1m9 0h1m9 0h1m9 0h1m9 0h1m9 0h1m9 0h1m9 0h1m9 0h1m9 0h1m9 0h1m9 0h1m9 0h1m9 0h1m9 0h1m9 0h1m9 0h1m10 0h1m9 0h1m9 0h1m9 0h1m9 0h1m9 0h1m9 0h1M407 223.5h1m9 0h1m9 0h1m9 0h1m9 0h1m9 0h1m10 0h1m9 0h1m9 0h1m9 0h1m9 0h1m9 0h1m9 0h1m9 0h1m9 0h1m9 0h1m9 0h1m9 0h1m9 0h1m9 0h1m9 0h1m9 0h1m9 0h1m10 0h1m9 0h1m9 0h1m9 0h1m9 0h1m9 0h1m9 0h1m9 0h1m9 0h1m9 0h1m9 0h1m9 0h1m9 0h1m9 0h1m9 0h1m9 0h1m9 0h1m10 0h1m9 0h1m9 0h1m9 0h1m9 0h1m9 0h1m9 0h1m9 0h1m9 0h1m9 0h1m9 0h1m9 0h1m9 0h1m9 0h1m9 0h1m9 0h1m9 0h1m10 0h1m9 0h1m9 0h1m9 0h1m9 0h1m9 0h1m9 0h1m9 0h1m9 0h1m9 0h1m9 0h1m9 0h1m9 0h1m9 0h1m9 0h1m9 0h1m10 0h1m9 0h1m9 0h1m9 0h1m9 0h1m9 0h1m9 0h1m9 0h1m9 0h1m9 0h1m9 0h1m9 0h1m9 0h1m9 0h1m9 0h1m9 0h1m9 0h1m10 0h1m9 0h1m9 0h1m9 0h1m9 0h1m9 0h1m9 0h1M407 233.5h1m9 0h1m9 0h1m9 0h1m9 0h1m9 0h1m10 0h1m9 0h1m9 0h1m9 0h1m9 0h1m9 0h1m9 0h1m9 0h1m9 0h1m9 0h1m9 0h1m9 0h1m9 0h1m9 0h1m9 0h1m9 0h1m9 0h1m10 0h1m9 0h1m9 0h1m9 0h1m9 0h1m9 0h1m9 0h1m9 0h1m9 0h1m9 0h1m9 0h1m9 0h1m9 0h1m9 0h1m9 0h1m9 0h1m9 0h1m10 0h1m9 0h1m9 0h1m9 0h1m9 0h1m9 0h1m9 0h1m9 0h1m9 0h1m9 0h1m9 0h1m9 0h1m9 0h1m9 0h1m9 0h1m9 0h1m9 0h1m10 0h1m9 0h1m9 0h1m9 0h1m9 0h1m9 0h1m9 0h1m9 0h1m9 0h1m9 0h1m9 0h1m9 0h1m9 0h1m9 0h1m9 0h1m9 0h1m10 0h1m9 0h1m9 0h1m9 0h1m9 0h1m9 0h1m9 0h1m9 0h1m9 0h1m9 0h1m9 0h1m9 0h1m9 0h1m9 0h1m9 0h1m9 0h1m9 0h1m10 0h1m9 0h1m9 0h1m9 0h1m9 0h1m9 0h1m9 0h1M407 244.5h1m9 0h1m9 0h1m9 0h1m9 0h1m9 0h1m10 0h1m9 0h1m9 0h1m9 0h1m9 0h1m9 0h1m9 0h1m9 0h1m9 0h1m9 0h1m9 0h1m9 0h1m9 0h1m9 0h1m9 0h1m9 0h1m9 0h1m10 0h1m9 0h1m9 0h1m9 0h1m9 0h1m9 0h1m9 0h1m9 0h1m9 0h1m9 0h1m9 0h1m9 0h1m9 0h1m9 0h1m9 0h1m9 0h1m9 0h1m10 0h1m9 0h1m9 0h1m9 0h1m9 0h1m9 0h1m9 0h1m9 0h1m9 0h1m9 0h1m9 0h1m9 0h1m9 0h1m9 0h1m9 0h1m9 0h1m9 0h1m10 0h1m9 0h1m9 0h1m9 0h1m9 0h1m9 0h1m9 0h1m9 0h1m9 0h1m9 0h1m9 0h1m9 0h1m9 0h1m9 0h1m9 0h1m9 0h1m10 0h1m9 0h1m9 0h1m9 0h1m9 0h1m9 0h1m9 0h1m9 0h1m9 0h1m9 0h1m9 0h1m9 0h1m9 0h1m9 0h1m9 0h1m9 0h1m9 0h1m10 0h1m9 0h1m9 0h1m9 0h1m9 0h1m9 0h1m9 0h1M407 254.5h1m9 0h1m9 0h1m9 0h1m9 0h1m9 0h1m10 0h1m9 0h1m9 0h1m9 0h1m9 0h1m9 0h1m9 0h1m9 0h1m9 0h1m9 0h1m9 0h1m9 0h1m9 0h1m9 0h1m9 0h1m9 0h1m9 0h1m10 0h1m9 0h1m9 0h1m9 0h1m9 0h1m9 0h1m9 0h1m9 0h1m9 0h1m9 0h1m9 0h1m9 0h1m9 0h1m9 0h1m9 0h1m9 0h1m9 0h1m10 0h1m9 0h1m9 0h1m9 0h1m9 0h1m9 0h1m9 0h1m9 0h1m9 0h1m9 0h1m9 0h1m9 0h1m9 0h1m9 0h1m9 0h1m9 0h1m9 0h1m10 0h1m9 0h1m9 0h1m9 0h1m9 0h1m9 0h1m9 0h1m9 0h1m9 0h1m9 0h1m9 0h1m9 0h1m9 0h1m9 0h1m9 0h1m9 0h1m10 0h1m9 0h1m9 0h1m9 0h1m9 0h1m9 0h1m9 0h1m9 0h1m9 0h1m9 0h1m9 0h1m9 0h1m9 0h1m9 0h1m9 0h1m9 0h1m9 0h1m10 0h1m9 0h1m9 0h1m9 0h1m9 0h1m9 0h1m9 0h1M407 264.5h1m9 0h1m9 0h1m9 0h1m9 0h1m9 0h1m10 0h1m9 0h1m9 0h1m9 0h1m9 0h1m9 0h1m9 0h1m9 0h1m9 0h1m9 0h1m9 0h1m9 0h1m9 0h1m9 0h1m9 0h1m9 0h1m9 0h1m10 0h1m9 0h1m9 0h1m9 0h1m9 0h1m9 0h1m9 0h1m9 0h1m9 0h1m9 0h1m9 0h1m9 0h1m9 0h1m9 0h1m9 0h1m9 0h1m9 0h1m10 0h1m9 0h1m9 0h1m9 0h1m9 0h1m9 0h1m9 0h1m9 0h1m9 0h1m9 0h1m9 0h1m9 0h1m9 0h1m9 0h1m9 0h1m9 0h1m9 0h1m10 0h1m9 0h1m9 0h1m9 0h1m9 0h1m9 0h1m9 0h1m9 0h1m9 0h1m9 0h1m9 0h1m9 0h1m9 0h1m9 0h1m9 0h1m9 0h1m10 0h1m9 0h1m9 0h1m9 0h1m9 0h1m9 0h1m9 0h1m9 0h1m9 0h1m9 0h1m9 0h1m9 0h1m9 0h1m9 0h1m9 0h1m9 0h1m9 0h1m10 0h1m9 0h1m9 0h1m9 0h1m9 0h1m9 0h1m9 0h1M407 274.5h1m9 0h1m9 0h1m9 0h1m9 0h1m9 0h1m10 0h1m9 0h1m9 0h1m9 0h1m9 0h1m9 0h1m9 0h1m9 0h1m9 0h1m9 0h1m9 0h1m9 0h1m9 0h1m9 0h1m9 0h1m9 0h1m9 0h1m10 0h1m9 0h1m9 0h1m9 0h1m9 0h1m9 0h1m9 0h1m9 0h1m9 0h1m9 0h1m9 0h1m9 0h1m9 0h1m9 0h1m9 0h1m9 0h1m9 0h1m10 0h1m9 0h1m9 0h1m9 0h1m9 0h1m9 0h1m9 0h1m9 0h1m9 0h1m9 0h1m9 0h1m9 0h1m9 0h1m9 0h1m9 0h1m9 0h1m9 0h1m10 0h1m9 0h1m9 0h1m9 0h1m9 0h1m9 0h1m9 0h1m9 0h1m9 0h1m9 0h1m9 0h1m9 0h1m9 0h1m9 0h1m9 0h1m9 0h1m10 0h1m9 0h1m9 0h1m9 0h1m9 0h1m9 0h1m9 0h1m9 0h1m9 0h1m9 0h1m9 0h1m9 0h1m9 0h1m9 0h1m9 0h1m9 0h1m9 0h1m10 0h1m9 0h1m9 0h1m9 0h1m9 0h1m9 0h1m9 0h1M407 284.5h1m9 0h1m9 0h1m9 0h1m9 0h1m9 0h1m10 0h1m9 0h1m9 0h1m9 0h1m9 0h1m9 0h1m9 0h1m9 0h1m9 0h1m9 0h1m9 0h1m9 0h1m9 0h1m9 0h1m9 0h1m9 0h1m9 0h1m10 0h1m9 0h1m9 0h1m9 0h1m9 0h1m9 0h1m9 0h1m9 0h1m9 0h1m9 0h1m9 0h1m9 0h1m9 0h1m9 0h1m9 0h1m9 0h1m9 0h1m10 0h1m9 0h1m9 0h1m9 0h1m9 0h1m9 0h1m9 0h1m9 0h1m9 0h1m9 0h1m9 0h1m9 0h1m9 0h1m9 0h1m9 0h1m9 0h1m9 0h1m10 0h1m9 0h1m9 0h1m9 0h1m9 0h1m9 0h1m9 0h1m9 0h1m9 0h1m9 0h1m9 0h1m9 0h1m9 0h1m9 0h1m9 0h1m9 0h1m10 0h1m9 0h1m9 0h1m9 0h1m9 0h1m9 0h1m9 0h1m9 0h1m9 0h1m9 0h1m9 0h1m9 0h1m9 0h1m9 0h1m9 0h1m9 0h1m9 0h1m10 0h1m9 0h1m9 0h1m9 0h1m9 0h1m9 0h1m9 0h1M407 294.5h1m9 0h1m9 0h1m9 0h1m9 0h1m9 0h1m10 0h1m9 0h1m9 0h1m9 0h1m9 0h1m9 0h1m9 0h1m9 0h1m9 0h1m9 0h1m9 0h1m9 0h1m9 0h1m9 0h1m9 0h1m9 0h1m9 0h1m10 0h1m9 0h1m9 0h1m9 0h1m9 0h1m9 0h1m9 0h1m9 0h1m9 0h1m9 0h1m9 0h1m9 0h1m9 0h1m9 0h1m9 0h1m9 0h1m9 0h1m10 0h1m9 0h1m9 0h1m9 0h1m9 0h1m9 0h1m9 0h1m9 0h1m9 0h1m9 0h1m9 0h1m9 0h1m9 0h1m9 0h1m9 0h1m9 0h1m9 0h1m10 0h1m9 0h1m9 0h1m9 0h1m9 0h1m9 0h1m9 0h1m9 0h1m9 0h1m9 0h1m9 0h1m9 0h1m9 0h1m9 0h1m9 0h1m9 0h1m10 0h1m9 0h1m9 0h1m9 0h1m9 0h1m9 0h1m9 0h1m9 0h1m9 0h1m9 0h1m9 0h1m9 0h1m9 0h1m9 0h1m9 0h1m9 0h1m9 0h1m10 0h1m9 0h1m9 0h1m9 0h1m9 0h1m9 0h1m9 0h1M407 304.5h1m9 0h1m9 0h1m9 0h1m9 0h1m9 0h1m10 0h1m9 0h1m9 0h1m9 0h1m9 0h1m9 0h1m9 0h1m9 0h1m9 0h1m9 0h1m9 0h1m9 0h1m9 0h1m9 0h1m9 0h1m9 0h1m9 0h1m10 0h1m9 0h1m9 0h1m9 0h1m9 0h1m9 0h1m9 0h1m9 0h1m9 0h1m9 0h1m9 0h1m9 0h1m9 0h1m9 0h1m9 0h1m9 0h1m9 0h1m10 0h1m9 0h1m9 0h1m9 0h1m9 0h1m9 0h1m9 0h1m9 0h1m9 0h1m9 0h1m9 0h1m9 0h1m9 0h1m9 0h1m9 0h1m9 0h1m9 0h1m10 0h1m9 0h1m9 0h1m9 0h1m9 0h1m9 0h1m9 0h1m9 0h1m9 0h1m9 0h1m9 0h1m9 0h1m9 0h1m9 0h1m9 0h1m9 0h1m10 0h1m9 0h1m9 0h1m9 0h1m9 0h1m9 0h1m9 0h1m9 0h1m9 0h1m9 0h1m9 0h1m9 0h1m9 0h1m9 0h1m9 0h1m9 0h1m9 0h1m10 0h1m9 0h1m9 0h1m9 0h1m9 0h1m9 0h1m9 0h1M407 314.5h1m9 0h1m9 0h1m9 0h1m9 0h1m9 0h1m10 0h1m9 0h1m9 0h1m9 0h1m9 0h1m9 0h1m9 0h1m9 0h1m9 0h1m9 0h1m9 0h1m9 0h1m9 0h1m9 0h1m9 0h1m9 0h1m9 0h1m10 0h1m9 0h1m9 0h1m9 0h1m9 0h1m9 0h1m9 0h1m9 0h1m9 0h1m9 0h1m9 0h1m9 0h1m9 0h1m9 0h1m9 0h1m9 0h1m9 0h1m10 0h1m9 0h1m9 0h1m9 0h1m9 0h1m9 0h1m9 0h1m9 0h1m9 0h1m9 0h1m9 0h1m9 0h1m9 0h1m9 0h1m9 0h1m9 0h1m9 0h1m10 0h1m9 0h1m9 0h1m9 0h1m9 0h1m9 0h1m9 0h1m9 0h1m9 0h1m9 0h1m9 0h1m9 0h1m9 0h1m9 0h1m9 0h1m9 0h1m10 0h1m9 0h1m9 0h1m9 0h1m9 0h1m9 0h1m9 0h1m9 0h1m9 0h1m9 0h1m9 0h1m9 0h1m9 0h1m9 0h1m9 0h1m9 0h1m9 0h1m10 0h1m9 0h1m9 0h1m9 0h1m9 0h1m9 0h1m9 0h1M407 324.5h1m9 0h1m9 0h1m9 0h1m9 0h1m9 0h1m10 0h1m9 0h1m9 0h1m9 0h1m9 0h1m9 0h1m9 0h1m9 0h1m9 0h1m9 0h1m9 0h1m9 0h1m9 0h1m9 0h1m9 0h1m9 0h1m9 0h1m10 0h1m9 0h1m9 0h1m9 0h1m9 0h1m9 0h1m9 0h1m9 0h1m9 0h1m9 0h1m9 0h1m9 0h1m9 0h1m9 0h1m9 0h1m9 0h1m9 0h1m10 0h1m9 0h1m9 0h1m9 0h1m9 0h1m9 0h1m9 0h1m9 0h1m9 0h1m9 0h1m9 0h1m9 0h1m9 0h1m9 0h1m9 0h1m9 0h1m9 0h1m10 0h1m9 0h1m9 0h1m9 0h1m9 0h1m9 0h1m9 0h1m9 0h1m9 0h1m9 0h1m9 0h1m9 0h1m9 0h1m9 0h1m9 0h1m9 0h1m10 0h1m9 0h1m9 0h1m9 0h1m9 0h1m9 0h1m9 0h1m9 0h1m9 0h1m9 0h1m9 0h1m9 0h1m9 0h1m9 0h1m9 0h1m9 0h1m9 0h1m10 0h1m9 0h1m9 0h1m9 0h1m9 0h1m9 0h1m9 0h1M407 334.5h1m9 0h1m9 0h1m9 0h1m9 0h1m9 0h1m10 0h1m9 0h1m9 0h1m9 0h1m9 0h1m9 0h1m9 0h1m9 0h1m9 0h1m9 0h1m9 0h1m9 0h1m9 0h1m9 0h1m9 0h1m9 0h1m9 0h1m10 0h1m9 0h1m9 0h1m9 0h1m9 0h1m9 0h1m9 0h1m9 0h1m9 0h1m9 0h1m9 0h1m9 0h1m9 0h1m9 0h1m9 0h1m9 0h1m9 0h1m10 0h1m9 0h1m9 0h1m9 0h1m9 0h1m9 0h1m9 0h1m9 0h1m9 0h1m9 0h1m9 0h1m9 0h1m9 0h1m9 0h1m9 0h1m9 0h1m9 0h1m10 0h1m9 0h1m9 0h1m9 0h1m9 0h1m9 0h1m9 0h1m9 0h1m9 0h1m9 0h1m9 0h1m9 0h1m9 0h1m9 0h1m9 0h1m9 0h1m10 0h1m9 0h1m9 0h1m9 0h1m9 0h1m9 0h1m9 0h1m9 0h1m9 0h1m9 0h1m9 0h1m9 0h1m9 0h1m9 0h1m9 0h1m9 0h1m9 0h1m10 0h1m9 0h1m9 0h1m9 0h1m9 0h1m9 0h1m9 0h1M407 344.5h1m9 0h1m9 0h1m9 0h1m9 0h1m9 0h1m10 0h1m9 0h1m9 0h1m9 0h1m9 0h1m9 0h1m9 0h1m9 0h1m9 0h1m9 0h1m9 0h1m9 0h1m9 0h1m9 0h1m9 0h1m9 0h1m9 0h1m10 0h1m9 0h1m9 0h1m9 0h1m9 0h1m9 0h1m9 0h1m9 0h1m9 0h1m9 0h1m9 0h1m9 0h1m9 0h1m9 0h1m9 0h1m9 0h1m9 0h1m10 0h1m9 0h1m9 0h1m9 0h1m9 0h1m9 0h1m9 0h1m9 0h1m9 0h1m9 0h1m9 0h1m9 0h1m9 0h1m9 0h1m9 0h1m9 0h1m9 0h1m10 0h1m9 0h1m9 0h1m9 0h1m9 0h1m9 0h1m9 0h1m9 0h1m9 0h1m9 0h1m9 0h1m9 0h1m9 0h1m9 0h1m9 0h1m9 0h1m10 0h1m9 0h1m9 0h1m9 0h1m9 0h1m9 0h1m9 0h1m9 0h1m9 0h1m9 0h1m9 0h1m9 0h1m9 0h1m9 0h1m9 0h1m9 0h1m9 0h1m10 0h1m9 0h1m9 0h1m9 0h1m9 0h1m9 0h1m9 0h1M407 354.5h1m9 0h1m9 0h1m9 0h1m9 0h1m9 0h1m10 0h1m9 0h1m9 0h1m9 0h1m9 0h1m9 0h1m9 0h1m9 0h1m9 0h1m9 0h1m9 0h1m9 0h1m9 0h1m9 0h1m9 0h1m9 0h1m9 0h1m10 0h1m9 0h1m9 0h1m9 0h1m9 0h1m9 0h1m9 0h1m9 0h1m9 0h1m9 0h1m9 0h1m9 0h1m9 0h1m9 0h1m9 0h1m9 0h1m9 0h1m10 0h1m9 0h1m9 0h1m9 0h1m9 0h1m9 0h1m9 0h1m9 0h1m9 0h1m9 0h1m9 0h1m9 0h1m9 0h1m9 0h1m9 0h1m9 0h1m9 0h1m10 0h1m9 0h1m9 0h1m9 0h1m9 0h1m9 0h1m9 0h1m9 0h1m9 0h1m9 0h1m9 0h1m9 0h1m9 0h1m9 0h1m9 0h1m9 0h1m10 0h1m9 0h1m9 0h1m9 0h1m9 0h1m9 0h1m9 0h1m9 0h1m9 0h1m9 0h1m9 0h1m9 0h1m9 0h1m9 0h1m9 0h1m9 0h1m9 0h1m10 0h1m9 0h1m9 0h1m9 0h1m9 0h1m9 0h1m9 0h1M407 364.5h1m9 0h1m9 0h1m9 0h1m9 0h1m9 0h1m10 0h1m9 0h1m9 0h1m9 0h1m9 0h1m9 0h1m9 0h1m9 0h1m9 0h1m9 0h1m9 0h1m9 0h1m9 0h1m9 0h1m9 0h1m9 0h1m9 0h1m10 0h1m9 0h1m9 0h1m9 0h1m9 0h1m9 0h1m9 0h1m9 0h1m9 0h1m9 0h1m9 0h1m9 0h1m9 0h1m9 0h1m9 0h1m9 0h1m9 0h1m10 0h1m9 0h1m9 0h1m9 0h1m9 0h1m9 0h1m9 0h1m9 0h1m9 0h1m9 0h1m9 0h1m9 0h1m9 0h1m9 0h1m9 0h1m9 0h1m9 0h1m10 0h1m9 0h1m9 0h1m9 0h1m9 0h1m9 0h1m9 0h1m9 0h1m9 0h1m9 0h1m9 0h1m9 0h1m9 0h1m9 0h1m9 0h1m9 0h1m10 0h1m9 0h1m9 0h1m9 0h1m9 0h1m9 0h1m9 0h1m9 0h1m9 0h1m9 0h1m9 0h1m9 0h1m9 0h1m9 0h1m9 0h1m9 0h1m9 0h1m10 0h1m9 0h1m9 0h1m9 0h1m9 0h1m9 0h1m9 0h1M407 374.5h1m9 0h1m9 0h1m9 0h1m9 0h1m9 0h1m10 0h1m9 0h1m9 0h1m9 0h1m9 0h1m9 0h1m9 0h1m9 0h1m9 0h1m9 0h1m9 0h1m9 0h1m9 0h1m9 0h1m9 0h1m9 0h1m9 0h1m10 0h1m9 0h1m9 0h1m9 0h1m9 0h1m9 0h1m9 0h1m9 0h1m9 0h1m9 0h1m9 0h1m9 0h1m9 0h1m9 0h1m9 0h1m9 0h1m9 0h1m10 0h1m9 0h1m9 0h1m9 0h1m9 0h1m9 0h1m9 0h1m9 0h1m9 0h1m9 0h1m9 0h1m9 0h1m9 0h1m9 0h1m9 0h1m9 0h1m9 0h1m10 0h1m9 0h1m9 0h1m9 0h1m9 0h1m9 0h1m9 0h1m9 0h1m9 0h1m9 0h1m9 0h1m9 0h1m9 0h1m9 0h1m9 0h1m9 0h1m10 0h1m9 0h1m9 0h1m9 0h1m9 0h1m9 0h1m9 0h1m9 0h1m9 0h1m9 0h1m9 0h1m9 0h1m9 0h1m9 0h1m9 0h1m9 0h1m9 0h1m10 0h1m9 0h1m9 0h1m9 0h1m9 0h1m9 0h1m9 0h1M407 384.5h1m9 0h1m9 0h1m9 0h1m9 0h1m9 0h1m10 0h1m9 0h1m9 0h1m9 0h1m9 0h1m9 0h1m9 0h1m9 0h1m9 0h1m9 0h1m9 0h1m9 0h1m9 0h1m9 0h1m9 0h1m9 0h1m9 0h1m10 0h1m9 0h1m9 0h1m9 0h1m9 0h1m9 0h1m9 0h1m9 0h1m9 0h1m9 0h1m9 0h1m9 0h1m9 0h1m9 0h1m9 0h1m9 0h1m9 0h1m10 0h1m9 0h1m9 0h1m9 0h1m9 0h1m9 0h1m9 0h1m9 0h1m9 0h1m9 0h1m9 0h1m9 0h1m9 0h1m9 0h1m9 0h1m9 0h1m9 0h1m10 0h1m9 0h1m9 0h1m9 0h1m9 0h1m9 0h1m9 0h1m9 0h1m9 0h1m9 0h1m9 0h1m9 0h1m9 0h1m9 0h1m9 0h1m9 0h1m10 0h1m9 0h1m9 0h1m9 0h1m9 0h1m9 0h1m9 0h1m9 0h1m9 0h1m9 0h1m9 0h1m9 0h1m9 0h1m9 0h1m9 0h1m9 0h1m9 0h1m10 0h1m9 0h1m9 0h1m9 0h1m9 0h1m9 0h1m9 0h1M407 394.5h1m9 0h1m9 0h1m9 0h1m9 0h1m9 0h1m10 0h1m9 0h1m9 0h1m9 0h1m9 0h1m9 0h1m9 0h1m9 0h1m9 0h1m9 0h1m9 0h1m9 0h1m9 0h1m9 0h1m9 0h1m9 0h1m9 0h1m10 0h1m9 0h1m9 0h1m9 0h1m9 0h1m9 0h1m9 0h1m9 0h1m9 0h1m9 0h1m9 0h1m9 0h1m9 0h1m9 0h1m9 0h1m9 0h1m9 0h1m10 0h1m9 0h1m9 0h1m9 0h1m9 0h1m9 0h1m9 0h1m9 0h1m9 0h1m9 0h1m9 0h1m9 0h1m9 0h1m9 0h1m9 0h1m9 0h1m9 0h1m10 0h1m9 0h1m9 0h1m9 0h1m9 0h1m9 0h1m9 0h1m9 0h1m9 0h1m9 0h1m9 0h1m9 0h1m9 0h1m9 0h1m9 0h1m9 0h1m10 0h1m9 0h1m9 0h1m9 0h1m9 0h1m9 0h1m9 0h1m9 0h1m9 0h1m9 0h1m9 0h1m9 0h1m9 0h1m9 0h1m9 0h1m9 0h1m9 0h1m10 0h1m9 0h1m9 0h1m9 0h1m9 0h1m9 0h1m9 0h1M407 404.5h1m9 0h1m9 0h1m9 0h1m9 0h1m9 0h1m10 0h1m9 0h1m9 0h1m9 0h1m9 0h1m9 0h1m9 0h1m9 0h1m9 0h1m9 0h1m9 0h1m9 0h1m9 0h1m9 0h1m9 0h1m9 0h1m9 0h1m10 0h1m9 0h1m9 0h1m9 0h1m9 0h1m9 0h1m9 0h1m9 0h1m9 0h1m9 0h1m9 0h1m9 0h1m9 0h1m9 0h1m9 0h1m9 0h1m9 0h1m10 0h1m9 0h1m9 0h1m9 0h1m9 0h1m9 0h1m9 0h1m9 0h1m9 0h1m9 0h1m9 0h1m9 0h1m9 0h1m9 0h1m9 0h1m9 0h1m9 0h1m10 0h1m9 0h1m9 0h1m9 0h1m9 0h1m9 0h1m9 0h1m9 0h1m9 0h1m9 0h1m9 0h1m9 0h1m9 0h1m9 0h1m9 0h1m9 0h1m10 0h1m9 0h1m9 0h1m9 0h1m9 0h1m9 0h1m9 0h1m9 0h1m9 0h1m9 0h1m9 0h1m9 0h1m9 0h1m9 0h1m9 0h1m9 0h1m9 0h1m10 0h1m9 0h1m9 0h1m9 0h1m9 0h1m9 0h1m9 0h1M407 415.5h1m9 0h1m9 0h1m9 0h1m9 0h1m9 0h1m10 0h1m9 0h1m9 0h1m9 0h1m9 0h1m9 0h1m9 0h1m9 0h1m9 0h1m9 0h1m9 0h1m9 0h1m9 0h1m9 0h1m9 0h1m9 0h1m9 0h1m10 0h1m9 0h1m9 0h1m9 0h1m9 0h1m9 0h1m9 0h1m9 0h1m9 0h1m9 0h1m9 0h1m9 0h1m9 0h1m9 0h1m9 0h1m9 0h1m9 0h1m10 0h1m9 0h1m9 0h1m9 0h1m9 0h1m9 0h1m9 0h1m9 0h1m9 0h1m9 0h1m9 0h1m9 0h1m9 0h1m9 0h1m9 0h1m9 0h1m9 0h1m10 0h1m9 0h1m9 0h1m9 0h1m9 0h1m9 0h1m9 0h1m9 0h1m9 0h1m9 0h1m9 0h1m9 0h1m9 0h1m9 0h1m9 0h1m9 0h1m10 0h1m9 0h1m9 0h1m9 0h1m9 0h1m9 0h1m9 0h1m9 0h1m9 0h1m9 0h1m9 0h1m9 0h1m9 0h1m9 0h1m9 0h1m9 0h1m9 0h1m10 0h1m9 0h1m9 0h1m9 0h1m9 0h1m9 0h1m9 0h1M407 425.5h1m9 0h1m9 0h1m9 0h1m9 0h1m9 0h1m10 0h1m9 0h1m9 0h1m9 0h1m9 0h1m9 0h1m9 0h1m9 0h1m9 0h1m9 0h1m9 0h1m9 0h1m9 0h1m9 0h1m9 0h1m9 0h1m9 0h1m10 0h1m9 0h1m9 0h1m9 0h1m9 0h1m9 0h1m9 0h1m9 0h1m9 0h1m9 0h1m9 0h1m9 0h1m9 0h1m9 0h1m9 0h1m9 0h1m9 0h1m10 0h1m9 0h1m9 0h1m9 0h1m9 0h1m9 0h1m9 0h1m9 0h1m9 0h1m9 0h1m9 0h1m9 0h1m9 0h1m9 0h1m9 0h1m9 0h1m9 0h1m10 0h1m9 0h1m9 0h1m9 0h1m9 0h1m9 0h1m9 0h1m9 0h1m9 0h1m9 0h1m9 0h1m9 0h1m9 0h1m9 0h1m9 0h1m9 0h1m10 0h1m9 0h1m9 0h1m9 0h1m9 0h1m9 0h1m9 0h1m9 0h1m9 0h1m9 0h1m9 0h1m9 0h1m9 0h1m9 0h1m9 0h1m9 0h1m9 0h1m10 0h1m9 0h1m9 0h1m9 0h1m9 0h1m9 0h1m9 0h1M407 435.5h1m9 0h1m9 0h1m9 0h1m9 0h1m9 0h1m10 0h1m9 0h1m9 0h1m9 0h1m9 0h1m9 0h1m9 0h1m9 0h1m9 0h1m9 0h1m9 0h1m9 0h1m9 0h1m9 0h1m9 0h1m9 0h1m9 0h1m10 0h1m9 0h1m9 0h1m9 0h1m9 0h1m9 0h1m9 0h1m9 0h1m9 0h1m9 0h1m9 0h1m9 0h1m9 0h1m9 0h1m9 0h1m9 0h1m9 0h1m10 0h1m9 0h1m9 0h1m9 0h1m9 0h1m9 0h1m9 0h1m9 0h1m9 0h1m9 0h1m9 0h1m9 0h1m9 0h1m9 0h1m9 0h1m9 0h1m9 0h1m10 0h1m9 0h1m9 0h1m9 0h1m9 0h1m9 0h1m9 0h1m9 0h1m9 0h1m9 0h1m9 0h1m9 0h1m9 0h1m9 0h1m9 0h1m9 0h1m10 0h1m9 0h1m9 0h1m9 0h1m9 0h1m9 0h1m9 0h1m9 0h1m9 0h1m9 0h1m9 0h1m9 0h1m9 0h1m9 0h1m9 0h1m9 0h1m9 0h1m10 0h1m9 0h1m9 0h1m9 0h1m9 0h1m9 0h1m9 0h1M407 445.5h1m9 0h1m9 0h1m9 0h1m9 0h1m9 0h1m10 0h1m9 0h1m9 0h1m9 0h1m9 0h1m9 0h1m9 0h1m9 0h1m9 0h1m9 0h1m9 0h1m9 0h1m9 0h1m9 0h1m9 0h1m9 0h1m9 0h1m10 0h1m9 0h1m9 0h1m9 0h1m9 0h1m9 0h1m9 0h1m9 0h1m9 0h1m9 0h1m9 0h1m9 0h1m9 0h1m9 0h1m9 0h1m9 0h1m9 0h1m10 0h1m9 0h1m9 0h1m9 0h1m9 0h1m9 0h1m9 0h1m9 0h1m9 0h1m9 0h1m9 0h1m9 0h1m9 0h1m9 0h1m9 0h1m9 0h1m9 0h1m10 0h1m9 0h1m9 0h1m9 0h1m9 0h1m9 0h1m9 0h1m9 0h1m9 0h1m9 0h1m9 0h1m9 0h1m9 0h1m9 0h1m9 0h1m9 0h1m10 0h1m9 0h1m9 0h1m9 0h1m9 0h1m9 0h1m9 0h1m9 0h1m9 0h1m9 0h1m9 0h1m9 0h1m9 0h1m9 0h1m9 0h1m9 0h1m9 0h1m10 0h1m9 0h1m9 0h1m9 0h1m9 0h1m9 0h1m9 0h1M407 455.5h1m9 0h1m9 0h1m9 0h1m9 0h1m9 0h1m10 0h1m9 0h1m9 0h1m9 0h1m9 0h1m9 0h1m9 0h1m9 0h1m9 0h1m9 0h1m9 0h1m9 0h1m9 0h1m9 0h1m9 0h1m9 0h1m9 0h1m10 0h1m9 0h1m9 0h1m9 0h1m9 0h1m9 0h1m9 0h1m9 0h1m9 0h1m9 0h1m9 0h1m9 0h1m9 0h1m9 0h1m9 0h1m9 0h1m9 0h1m10 0h1m9 0h1m9 0h1m9 0h1m9 0h1m9 0h1m9 0h1m9 0h1m9 0h1m9 0h1m9 0h1m9 0h1m9 0h1m9 0h1m9 0h1m9 0h1m9 0h1m10 0h1m9 0h1m9 0h1m9 0h1m9 0h1m9 0h1m9 0h1m9 0h1m9 0h1m9 0h1m9 0h1m9 0h1m9 0h1m9 0h1m9 0h1m9 0h1m10 0h1m9 0h1m9 0h1m9 0h1m9 0h1m9 0h1m9 0h1m9 0h1m9 0h1m9 0h1m9 0h1m9 0h1m9 0h1m9 0h1m9 0h1m9 0h1m9 0h1m10 0h1m9 0h1m9 0h1m9 0h1m9 0h1m9 0h1m9 0h1M407 465.5h1m9 0h1m9 0h1m9 0h1m9 0h1m9 0h1m10 0h1m9 0h1m9 0h1m9 0h1m9 0h1m9 0h1m9 0h1m9 0h1m9 0h1m9 0h1m9 0h1m9 0h1m9 0h1m9 0h1m9 0h1m9 0h1m9 0h1m10 0h1m9 0h1m9 0h1m9 0h1m9 0h1m9 0h1m9 0h1m9 0h1m9 0h1m9 0h1m9 0h1m9 0h1m9 0h1m9 0h1m9 0h1m9 0h1m9 0h1m10 0h1m9 0h1m9 0h1m9 0h1m9 0h1m9 0h1m9 0h1m9 0h1m9 0h1m9 0h1m9 0h1m9 0h1m9 0h1m9 0h1m9 0h1m9 0h1m9 0h1m10 0h1m9 0h1m9 0h1m9 0h1m9 0h1m9 0h1m9 0h1m9 0h1m9 0h1m9 0h1m9 0h1m9 0h1m9 0h1m9 0h1m9 0h1m9 0h1m10 0h1m9 0h1m9 0h1m9 0h1m9 0h1m9 0h1m9 0h1m9 0h1m9 0h1m9 0h1m9 0h1m9 0h1m9 0h1m9 0h1m9 0h1m9 0h1m9 0h1m10 0h1m9 0h1m9 0h1m9 0h1m9 0h1m9 0h1m9 0h1M407 475.5h1m9 0h1m9 0h1m9 0h1m9 0h1m9 0h1m10 0h1m9 0h1m9 0h1m9 0h1m9 0h1m9 0h1m9 0h1m9 0h1m9 0h1m9 0h1m9 0h1m9 0h1m9 0h1m9 0h1m9 0h1m9 0h1m9 0h1m10 0h1m9 0h1m9 0h1m9 0h1m9 0h1m9 0h1m9 0h1m9 0h1m9 0h1m9 0h1m9 0h1m9 0h1m9 0h1m9 0h1m9 0h1m9 0h1m9 0h1m10 0h1m9 0h1m9 0h1m9 0h1m9 0h1m9 0h1m9 0h1m9 0h1m9 0h1m9 0h1m9 0h1m9 0h1m9 0h1m9 0h1m9 0h1m9 0h1m9 0h1m10 0h1m9 0h1m9 0h1m9 0h1m9 0h1m9 0h1m9 0h1m9 0h1m9 0h1m9 0h1m9 0h1m9 0h1m9 0h1m9 0h1m9 0h1m9 0h1m10 0h1m9 0h1m9 0h1m9 0h1m9 0h1m9 0h1m9 0h1m9 0h1m9 0h1m9 0h1m9 0h1m9 0h1m9 0h1m9 0h1m9 0h1m9 0h1m9 0h1m10 0h1m9 0h1m9 0h1m9 0h1m9 0h1m9 0h1m9 0h1M407 485.5h1m9 0h1m9 0h1m9 0h1m9 0h1m9 0h1m10 0h1m9 0h1m9 0h1m9 0h1m9 0h1m9 0h1m9 0h1m9 0h1m9 0h1m9 0h1m9 0h1m9 0h1m9 0h1m9 0h1m9 0h1m9 0h1m9 0h1m10 0h1m9 0h1m9 0h1m9 0h1m9 0h1m9 0h1m9 0h1m9 0h1m9 0h1m9 0h1m9 0h1m9 0h1m9 0h1m9 0h1m9 0h1m9 0h1m9 0h1m10 0h1m9 0h1m9 0h1m9 0h1m9 0h1m9 0h1m9 0h1m9 0h1m9 0h1m9 0h1m9 0h1m9 0h1m9 0h1m9 0h1m9 0h1m9 0h1m9 0h1m10 0h1m9 0h1m9 0h1m9 0h1m9 0h1m9 0h1m9 0h1m9 0h1m9 0h1m9 0h1m9 0h1m9 0h1m9 0h1m9 0h1m9 0h1m9 0h1m10 0h1m9 0h1m9 0h1m9 0h1m9 0h1m9 0h1m9 0h1m9 0h1m9 0h1m9 0h1m9 0h1m9 0h1m9 0h1m9 0h1m9 0h1m9 0h1m9 0h1m10 0h1m9 0h1m9 0h1m9 0h1m9 0h1m9 0h1m9 0h1M407 495.5h1m9 0h1m9 0h1m9 0h1m9 0h1m9 0h1m10 0h1m9 0h1m9 0h1m9 0h1m9 0h1m9 0h1m9 0h1m9 0h1m9 0h1m9 0h1m9 0h1m9 0h1m9 0h1m9 0h1m9 0h1m9 0h1m9 0h1m10 0h1m9 0h1m9 0h1m9 0h1m9 0h1m9 0h1m9 0h1m9 0h1m9 0h1m9 0h1m9 0h1m9 0h1m9 0h1m9 0h1m9 0h1m9 0h1m9 0h1m10 0h1m9 0h1m9 0h1m9 0h1m9 0h1m9 0h1m9 0h1m9 0h1m9 0h1m9 0h1m9 0h1m9 0h1m9 0h1m9 0h1m9 0h1m9 0h1m9 0h1m10 0h1m9 0h1m9 0h1m9 0h1m9 0h1m9 0h1m9 0h1m9 0h1m9 0h1m9 0h1m9 0h1m9 0h1m9 0h1m9 0h1m9 0h1m9 0h1m10 0h1m9 0h1m9 0h1m9 0h1m9 0h1m9 0h1m9 0h1m9 0h1m9 0h1m9 0h1m9 0h1m9 0h1m9 0h1m9 0h1m9 0h1m9 0h1m9 0h1m10 0h1m9 0h1m9 0h1m9 0h1m9 0h1m9 0h1m9 0h1M407 505.5h1m9 0h1m9 0h1m9 0h1m9 0h1m9 0h1m10 0h1m9 0h1m9 0h1m9 0h1m9 0h1m9 0h1m9 0h1m9 0h1m9 0h1m9 0h1m9 0h1m9 0h1m9 0h1m9 0h1m9 0h1m9 0h1m9 0h1m10 0h1m9 0h1m9 0h1m9 0h1m9 0h1m9 0h1m9 0h1m9 0h1m9 0h1m9 0h1m9 0h1m9 0h1m9 0h1m9 0h1m9 0h1m9 0h1m9 0h1m10 0h1m9 0h1m9 0h1m9 0h1m9 0h1m9 0h1m9 0h1m9 0h1m9 0h1m9 0h1m9 0h1m9 0h1m9 0h1m9 0h1m9 0h1m9 0h1m9 0h1m10 0h1m9 0h1m9 0h1m9 0h1m9 0h1m9 0h1m9 0h1m9 0h1m9 0h1m9 0h1m9 0h1m9 0h1m9 0h1m9 0h1m9 0h1m9 0h1m10 0h1m9 0h1m9 0h1m9 0h1m9 0h1m9 0h1m9 0h1m9 0h1m9 0h1m9 0h1m9 0h1m9 0h1m9 0h1m9 0h1m9 0h1m9 0h1m9 0h1m10 0h1m9 0h1m9 0h1m9 0h1m9 0h1m9 0h1m9 0h1M407 515.5h1m9 0h1m9 0h1m9 0h1m9 0h1m9 0h1m10 0h1m9 0h1m9 0h1m9 0h1m9 0h1m9 0h1m9 0h1m9 0h1m9 0h1m9 0h1m9 0h1m9 0h1m9 0h1m9 0h1m9 0h1m9 0h1m9 0h1m10 0h1m9 0h1m9 0h1m9 0h1m9 0h1m9 0h1m9 0h1m9 0h1m9 0h1m9 0h1m9 0h1m9 0h1m9 0h1m9 0h1m9 0h1m9 0h1m9 0h1m10 0h1m9 0h1m9 0h1m9 0h1m9 0h1m9 0h1m9 0h1m9 0h1m9 0h1m9 0h1m9 0h1m9 0h1m9 0h1m9 0h1m9 0h1m9 0h1m9 0h1m10 0h1m9 0h1m9 0h1m9 0h1m9 0h1m9 0h1m9 0h1m9 0h1m9 0h1m9 0h1m9 0h1m9 0h1m9 0h1m9 0h1m9 0h1m9 0h1m10 0h1m9 0h1m9 0h1m9 0h1m9 0h1m9 0h1m9 0h1m9 0h1m9 0h1m9 0h1m9 0h1m9 0h1m9 0h1m9 0h1m9 0h1m9 0h1m9 0h1m10 0h1m9 0h1m9 0h1m9 0h1m9 0h1m9 0h1m9 0h1M407 525.5h1m9 0h1m9 0h1m9 0h1m9 0h1m9 0h1m10 0h1m9 0h1m9 0h1m9 0h1m9 0h1m9 0h1m9 0h1m9 0h1m9 0h1m9 0h1m9 0h1m9 0h1m9 0h1m9 0h1m9 0h1m9 0h1m9 0h1m10 0h1m9 0h1m9 0h1m9 0h1m9 0h1m9 0h1m9 0h1m9 0h1m9 0h1m9 0h1m9 0h1m9 0h1m9 0h1m9 0h1m9 0h1m9 0h1m9 0h1m10 0h1m9 0h1m9 0h1m9 0h1m9 0h1m9 0h1m9 0h1m9 0h1m9 0h1m9 0h1m9 0h1m9 0h1m9 0h1m9 0h1m9 0h1m9 0h1m9 0h1m10 0h1m9 0h1m9 0h1m9 0h1m9 0h1m9 0h1m9 0h1m9 0h1m9 0h1m9 0h1m9 0h1m9 0h1m9 0h1m9 0h1m9 0h1m9 0h1m10 0h1m9 0h1m9 0h1m9 0h1m9 0h1m9 0h1m9 0h1m9 0h1m9 0h1m9 0h1m9 0h1m9 0h1m9 0h1m9 0h1m9 0h1m9 0h1m9 0h1m10 0h1m9 0h1m9 0h1m9 0h1m9 0h1m9 0h1m9 0h1M407 535.5h1m9 0h1m9 0h1m9 0h1m9 0h1m9 0h1m10 0h1m9 0h1m9 0h1m9 0h1m9 0h1m9 0h1m9 0h1m9 0h1m9 0h1m9 0h1m9 0h1m9 0h1m9 0h1m9 0h1m9 0h1m9 0h1m9 0h1m10 0h1m9 0h1m9 0h1m9 0h1m9 0h1m9 0h1m9 0h1m9 0h1m9 0h1m9 0h1m9 0h1m9 0h1m9 0h1m9 0h1m9 0h1m9 0h1m9 0h1m10 0h1m9 0h1m9 0h1m9 0h1m9 0h1m9 0h1m9 0h1m9 0h1m9 0h1m9 0h1m9 0h1m9 0h1m9 0h1m9 0h1m9 0h1m9 0h1m9 0h1m10 0h1m9 0h1m9 0h1m9 0h1m9 0h1m9 0h1m9 0h1m9 0h1m9 0h1m9 0h1m9 0h1m9 0h1m9 0h1m9 0h1m9 0h1m9 0h1m10 0h1m9 0h1m9 0h1m9 0h1m9 0h1m9 0h1m9 0h1m9 0h1m9 0h1m9 0h1m9 0h1m9 0h1m9 0h1m9 0h1m9 0h1m9 0h1m9 0h1m10 0h1m9 0h1m9 0h1m9 0h1m9 0h1m9 0h1m9 0h1M407 545.5h1m9 0h1m9 0h1m9 0h1m9 0h1m9 0h1m10 0h1m9 0h1m9 0h1m9 0h1m9 0h1m9 0h1m9 0h1m9 0h1m9 0h1m9 0h1m9 0h1m9 0h1m9 0h1m9 0h1m9 0h1m9 0h1m9 0h1m10 0h1m9 0h1m9 0h1m9 0h1m9 0h1m9 0h1m9 0h1m9 0h1m9 0h1m9 0h1m9 0h1m9 0h1m9 0h1m9 0h1m9 0h1m9 0h1m9 0h1m10 0h1m9 0h1m9 0h1m9 0h1m9 0h1m9 0h1m9 0h1m9 0h1m9 0h1m9 0h1m9 0h1m9 0h1m9 0h1m9 0h1m9 0h1m9 0h1m9 0h1m10 0h1m9 0h1m9 0h1m9 0h1m9 0h1m9 0h1m9 0h1m9 0h1m9 0h1m9 0h1m9 0h1m9 0h1m9 0h1m9 0h1m9 0h1m9 0h1m10 0h1m9 0h1m9 0h1m9 0h1m9 0h1m9 0h1m9 0h1m9 0h1m9 0h1m9 0h1m9 0h1m9 0h1m9 0h1m9 0h1m9 0h1m9 0h1m9 0h1m10 0h1m9 0h1m9 0h1m9 0h1m9 0h1m9 0h1m9 0h1M407 555.5h1m9 0h1m9 0h1m9 0h1m9 0h1m9 0h1m10 0h1m9 0h1m9 0h1m9 0h1m9 0h1m9 0h1m9 0h1m9 0h1m9 0h1m9 0h1m9 0h1m9 0h1m9 0h1m9 0h1m9 0h1m9 0h1m9 0h1m10 0h1m9 0h1m9 0h1m9 0h1m9 0h1m9 0h1m9 0h1m9 0h1m9 0h1m9 0h1m9 0h1m9 0h1m9 0h1m9 0h1m9 0h1m9 0h1m9 0h1m10 0h1m9 0h1m9 0h1m9 0h1m9 0h1m9 0h1m9 0h1m9 0h1m9 0h1m9 0h1m9 0h1m9 0h1m9 0h1m9 0h1m9 0h1m9 0h1m9 0h1m10 0h1m9 0h1m9 0h1m9 0h1m9 0h1m9 0h1m9 0h1m9 0h1m9 0h1m9 0h1m9 0h1m9 0h1m9 0h1m9 0h1m9 0h1m9 0h1m10 0h1m9 0h1m9 0h1m9 0h1m9 0h1m9 0h1m9 0h1m9 0h1m9 0h1m9 0h1m9 0h1m9 0h1m9 0h1m9 0h1m9 0h1m9 0h1m9 0h1m10 0h1m9 0h1m9 0h1m9 0h1m9 0h1m9 0h1m9 0h1M407 565.5h1m9 0h1m9 0h1m9 0h1m9 0h1m9 0h1m10 0h1m9 0h1m9 0h1m9 0h1m9 0h1m9 0h1m9 0h1m9 0h1m9 0h1m9 0h1m9 0h1m9 0h1m9 0h1m9 0h1m9 0h1m9 0h1m9 0h1m10 0h1m9 0h1m9 0h1m9 0h1m9 0h1m9 0h1m9 0h1m9 0h1m9 0h1m9 0h1m9 0h1m9 0h1m9 0h1m9 0h1m9 0h1m9 0h1m9 0h1m10 0h1m9 0h1m9 0h1m9 0h1m9 0h1m9 0h1m9 0h1m9 0h1m9 0h1m9 0h1m9 0h1m9 0h1m9 0h1m9 0h1m9 0h1m9 0h1m9 0h1m10 0h1m9 0h1m9 0h1m9 0h1m9 0h1m9 0h1m9 0h1m9 0h1m9 0h1m9 0h1m9 0h1m9 0h1m9 0h1m9 0h1m9 0h1m9 0h1m10 0h1m9 0h1m9 0h1m9 0h1m9 0h1m9 0h1m9 0h1m9 0h1m9 0h1m9 0h1m9 0h1m9 0h1m9 0h1m9 0h1m9 0h1m9 0h1m9 0h1m10 0h1m9 0h1m9 0h1m9 0h1m9 0h1m9 0h1m9 0h1M407 575.5h1m9 0h1m9 0h1m9 0h1m9 0h1m9 0h1m10 0h1m9 0h1m9 0h1m9 0h1m9 0h1m9 0h1m9 0h1m9 0h1m9 0h1m9 0h1m9 0h1m9 0h1m9 0h1m9 0h1m9 0h1m9 0h1m9 0h1m10 0h1m9 0h1m9 0h1m9 0h1m9 0h1m9 0h1m9 0h1m9 0h1m9 0h1m9 0h1m9 0h1m9 0h1m9 0h1m9 0h1m9 0h1m9 0h1m9 0h1m10 0h1m9 0h1m9 0h1m9 0h1m9 0h1m9 0h1m9 0h1m9 0h1m9 0h1m9 0h1m9 0h1m9 0h1m9 0h1m9 0h1m9 0h1m9 0h1m9 0h1m10 0h1m9 0h1m9 0h1m9 0h1m9 0h1m9 0h1m9 0h1m9 0h1m9 0h1m9 0h1m9 0h1m9 0h1m9 0h1m9 0h1m9 0h1m9 0h1m10 0h1m9 0h1m9 0h1m9 0h1m9 0h1m9 0h1m9 0h1m9 0h1m9 0h1m9 0h1m9 0h1m9 0h1m9 0h1m9 0h1m9 0h1m9 0h1m9 0h1m10 0h1m9 0h1m9 0h1m9 0h1m9 0h1m9 0h1m9 0h1M407 586.5h1m9 0h1m9 0h1m9 0h1m9 0h1m9 0h1m10 0h1m9 0h1m9 0h1m9 0h1m9 0h1m9 0h1m9 0h1m9 0h1m9 0h1m9 0h1m9 0h1m9 0h1m9 0h1m9 0h1m9 0h1m9 0h1m9 0h1m10 0h1m9 0h1m9 0h1m9 0h1m9 0h1m9 0h1m9 0h1m9 0h1m9 0h1m9 0h1m9 0h1m9 0h1m9 0h1m9 0h1m9 0h1m9 0h1m9 0h1m10 0h1m9 0h1m9 0h1m9 0h1m9 0h1m9 0h1m9 0h1m9 0h1m9 0h1m9 0h1m9 0h1m9 0h1m9 0h1m9 0h1m9 0h1m9 0h1m9 0h1m10 0h1m9 0h1m9 0h1m9 0h1m9 0h1m9 0h1m9 0h1m9 0h1m9 0h1m9 0h1m9 0h1m9 0h1m9 0h1m9 0h1m9 0h1m9 0h1m10 0h1m9 0h1m9 0h1m9 0h1m9 0h1m9 0h1m9 0h1m9 0h1m9 0h1m9 0h1m9 0h1m9 0h1m9 0h1m9 0h1m9 0h1m9 0h1m9 0h1m10 0h1m9 0h1m9 0h1m9 0h1m9 0h1m9 0h1m9 0h1M407 596.5h1m9 0h1m9 0h1m9 0h1m9 0h1m9 0h1m10 0h1m9 0h1m9 0h1m9 0h1m9 0h1m9 0h1m9 0h1m9 0h1m9 0h1m9 0h1m9 0h1m9 0h1m9 0h1m9 0h1m9 0h1m9 0h1m9 0h1m10 0h1m9 0h1m9 0h1m9 0h1m9 0h1m9 0h1m9 0h1m9 0h1m9 0h1m9 0h1m9 0h1m9 0h1m9 0h1m9 0h1m9 0h1m9 0h1m9 0h1m10 0h1m9 0h1m9 0h1m9 0h1m9 0h1m9 0h1m9 0h1m9 0h1m9 0h1m9 0h1m9 0h1m9 0h1m9 0h1m9 0h1m9 0h1m9 0h1m9 0h1m10 0h1m9 0h1m9 0h1m9 0h1m9 0h1m9 0h1m9 0h1m9 0h1m9 0h1m9 0h1m9 0h1m9 0h1m9 0h1m9 0h1m9 0h1m9 0h1m10 0h1m9 0h1m9 0h1m9 0h1m9 0h1m9 0h1m9 0h1m9 0h1m9 0h1m9 0h1m9 0h1m9 0h1m9 0h1m9 0h1m9 0h1m9 0h1m9 0h1m10 0h1m9 0h1m9 0h1m9 0h1m9 0h1m9 0h1m9 0h1M407 606.5h1m9 0h1m9 0h1m9 0h1m9 0h1m9 0h1m10 0h1m9 0h1m9 0h1m9 0h1m9 0h1m9 0h1m9 0h1m9 0h1m9 0h1m9 0h1m9 0h1m9 0h1m9 0h1m9 0h1m9 0h1m9 0h1m9 0h1m10 0h1m9 0h1m9 0h1m9 0h1m9 0h1m9 0h1m9 0h1m9 0h1m9 0h1m9 0h1m9 0h1m9 0h1m9 0h1m9 0h1m9 0h1m9 0h1m9 0h1m10 0h1m9 0h1m9 0h1m9 0h1m9 0h1m9 0h1m9 0h1m9 0h1m9 0h1m9 0h1m9 0h1m9 0h1m9 0h1m9 0h1m9 0h1m9 0h1m9 0h1m10 0h1m9 0h1m9 0h1m9 0h1m9 0h1m9 0h1m9 0h1m9 0h1m9 0h1m9 0h1m9 0h1m9 0h1m9 0h1m9 0h1m9 0h1m9 0h1m10 0h1m9 0h1m9 0h1m9 0h1m9 0h1m9 0h1m9 0h1m9 0h1m9 0h1m9 0h1m9 0h1m9 0h1m9 0h1m9 0h1m9 0h1m9 0h1m9 0h1m10 0h1m9 0h1m9 0h1m9 0h1m9 0h1m9 0h1m9 0h1M407 616.5h1m9 0h1m9 0h1m9 0h1m9 0h1m9 0h1m10 0h1m9 0h1m9 0h1m9 0h1m9 0h1m9 0h1m9 0h1m9 0h1m9 0h1m9 0h1m9 0h1m9 0h1m9 0h1m9 0h1m9 0h1m9 0h1m9 0h1m10 0h1m9 0h1m9 0h1m9 0h1m9 0h1m9 0h1m9 0h1m9 0h1m9 0h1m9 0h1m9 0h1m9 0h1m9 0h1m9 0h1m9 0h1m9 0h1m9 0h1m10 0h1m9 0h1m9 0h1m9 0h1m9 0h1m9 0h1m9 0h1m9 0h1m9 0h1m9 0h1m9 0h1m9 0h1m9 0h1m9 0h1m9 0h1m9 0h1m9 0h1m10 0h1m9 0h1m9 0h1m9 0h1m9 0h1m9 0h1m9 0h1m9 0h1m9 0h1m9 0h1m9 0h1m9 0h1m9 0h1m9 0h1m9 0h1m9 0h1m10 0h1m9 0h1m9 0h1m9 0h1m9 0h1m9 0h1m9 0h1m9 0h1m9 0h1m9 0h1m9 0h1m9 0h1m9 0h1m9 0h1m9 0h1m9 0h1m9 0h1m10 0h1m9 0h1m9 0h1m9 0h1m9 0h1m9 0h1m9 0h1M407 626.5h1m9 0h1m9 0h1m9 0h1m9 0h1m9 0h1m10 0h1m9 0h1m9 0h1m9 0h1m9 0h1m9 0h1m9 0h1m9 0h1m9 0h1m9 0h1m9 0h1m9 0h1m9 0h1m9 0h1m9 0h1m9 0h1m9 0h1m10 0h1m9 0h1m9 0h1m9 0h1m9 0h1m9 0h1m9 0h1m9 0h1m9 0h1m9 0h1m9 0h1m9 0h1m9 0h1m9 0h1m9 0h1m9 0h1m9 0h1m10 0h1m9 0h1m9 0h1m9 0h1m9 0h1m9 0h1m9 0h1m9 0h1m9 0h1m9 0h1m9 0h1m9 0h1m9 0h1m9 0h1m9 0h1m9 0h1m9 0h1m10 0h1m9 0h1m9 0h1m9 0h1m9 0h1m9 0h1m9 0h1m9 0h1m9 0h1m9 0h1m9 0h1m9 0h1m9 0h1m9 0h1m9 0h1m9 0h1m10 0h1m9 0h1m9 0h1m9 0h1m9 0h1m9 0h1m9 0h1m9 0h1m9 0h1m9 0h1m9 0h1m9 0h1m9 0h1m9 0h1m9 0h1m9 0h1m9 0h1m10 0h1m9 0h1m9 0h1m9 0h1m9 0h1m9 0h1m9 0h1M407 636.5h1m9 0h1m9 0h1m9 0h1m9 0h1m9 0h1m10 0h1m9 0h1m9 0h1m9 0h1m9 0h1m9 0h1m9 0h1m9 0h1m9 0h1m9 0h1m9 0h1m9 0h1m9 0h1m9 0h1m9 0h1m9 0h1m9 0h1m10 0h1m9 0h1m9 0h1m9 0h1m9 0h1m9 0h1m9 0h1m9 0h1m9 0h1m9 0h1m9 0h1m9 0h1m9 0h1m9 0h1m9 0h1m9 0h1m9 0h1m10 0h1m9 0h1m9 0h1m9 0h1m9 0h1m9 0h1m9 0h1m9 0h1m9 0h1m9 0h1m9 0h1m9 0h1m9 0h1m9 0h1m9 0h1m9 0h1m9 0h1m10 0h1m9 0h1m9 0h1m9 0h1m9 0h1m9 0h1m9 0h1m9 0h1m9 0h1m9 0h1m9 0h1m9 0h1m9 0h1m9 0h1m9 0h1m9 0h1m10 0h1m9 0h1m9 0h1m9 0h1m9 0h1m9 0h1m9 0h1m9 0h1m9 0h1m9 0h1m9 0h1m9 0h1m9 0h1m9 0h1m9 0h1m9 0h1m9 0h1m10 0h1m9 0h1m9 0h1m9 0h1m9 0h1m9 0h1m9 0h1M407 646.5h1m9 0h1m9 0h1m9 0h1m9 0h1m9 0h1m10 0h1m9 0h1m9 0h1m9 0h1m9 0h1m9 0h1m9 0h1m9 0h1m9 0h1m9 0h1m9 0h1m9 0h1m9 0h1m9 0h1m9 0h1m9 0h1m9 0h1m10 0h1m9 0h1m9 0h1m9 0h1m9 0h1m9 0h1m9 0h1m9 0h1m9 0h1m9 0h1m9 0h1m9 0h1m9 0h1m9 0h1m9 0h1m9 0h1m9 0h1m10 0h1m9 0h1m9 0h1m9 0h1m9 0h1m9 0h1m9 0h1m9 0h1m9 0h1m9 0h1m9 0h1m9 0h1m9 0h1m9 0h1m9 0h1m9 0h1m9 0h1m10 0h1m9 0h1m9 0h1m9 0h1m9 0h1m9 0h1m9 0h1m9 0h1m9 0h1m9 0h1m9 0h1m9 0h1m9 0h1m9 0h1m9 0h1m9 0h1m10 0h1m9 0h1m9 0h1m9 0h1m9 0h1m9 0h1m9 0h1m9 0h1m9 0h1m9 0h1m9 0h1m9 0h1m9 0h1m9 0h1m9 0h1m9 0h1m9 0h1m10 0h1m9 0h1m9 0h1m9 0h1m9 0h1m9 0h1m9 0h1M407 656.5h1m9 0h1m9 0h1m9 0h1m9 0h1m9 0h1m10 0h1m9 0h1m9 0h1m9 0h1m9 0h1m9 0h1m9 0h1m9 0h1m9 0h1m9 0h1m9 0h1m9 0h1m9 0h1m9 0h1m9 0h1m9 0h1m9 0h1m10 0h1m9 0h1m9 0h1m9 0h1m9 0h1m9 0h1m9 0h1m9 0h1m9 0h1m9 0h1m9 0h1m9 0h1m9 0h1m9 0h1m9 0h1m9 0h1m9 0h1m10 0h1m9 0h1m9 0h1m9 0h1m9 0h1m9 0h1m9 0h1m9 0h1m9 0h1m9 0h1m9 0h1m9 0h1m9 0h1m9 0h1m9 0h1m9 0h1m9 0h1m10 0h1m9 0h1m9 0h1m9 0h1m9 0h1m9 0h1m9 0h1m9 0h1m9 0h1m9 0h1m9 0h1m9 0h1m9 0h1m9 0h1m9 0h1m9 0h1m10 0h1m9 0h1m9 0h1m9 0h1m9 0h1m9 0h1m9 0h1m9 0h1m9 0h1m9 0h1m9 0h1m9 0h1m9 0h1m9 0h1m9 0h1m9 0h1m9 0h1m10 0h1m9 0h1m9 0h1m9 0h1m9 0h1m9 0h1m9 0h1M407 666.5h1m9 0h1m9 0h1m9 0h1m9 0h1m9 0h1m10 0h1m9 0h1m9 0h1m9 0h1m9 0h1m9 0h1m9 0h1m9 0h1m9 0h1m9 0h1m9 0h1m9 0h1m9 0h1m9 0h1m9 0h1m9 0h1m9 0h1m10 0h1m9 0h1m9 0h1m9 0h1m9 0h1m9 0h1m9 0h1m9 0h1m9 0h1m9 0h1m9 0h1m9 0h1m9 0h1m9 0h1m9 0h1m9 0h1m9 0h1m10 0h1m9 0h1m9 0h1m9 0h1m9 0h1m9 0h1m9 0h1m9 0h1m9 0h1m9 0h1m9 0h1m9 0h1m9 0h1m9 0h1m9 0h1m9 0h1m9 0h1m10 0h1m9 0h1m9 0h1m9 0h1m9 0h1m9 0h1m9 0h1m9 0h1m9 0h1m9 0h1m9 0h1m9 0h1m9 0h1m9 0h1m9 0h1m9 0h1m10 0h1m9 0h1m9 0h1m9 0h1m9 0h1m9 0h1m9 0h1m9 0h1m9 0h1m9 0h1m9 0h1m9 0h1m9 0h1m9 0h1m9 0h1m9 0h1m9 0h1m10 0h1m9 0h1m9 0h1m9 0h1m9 0h1m9 0h1m9 0h1M407 676.5h1m9 0h1m9 0h1m9 0h1m9 0h1m9 0h1m10 0h1m9 0h1m9 0h1m9 0h1m9 0h1m9 0h1m9 0h1m9 0h1m9 0h1m9 0h1m9 0h1m9 0h1m9 0h1m9 0h1m9 0h1m9 0h1m9 0h1m10 0h1m9 0h1m9 0h1m9 0h1m9 0h1m9 0h1m9 0h1m9 0h1m9 0h1m9 0h1m9 0h1m9 0h1m9 0h1m9 0h1m9 0h1m9 0h1m9 0h1m10 0h1m9 0h1m9 0h1m9 0h1m9 0h1m9 0h1m9 0h1m9 0h1m9 0h1m9 0h1m9 0h1m9 0h1m9 0h1m9 0h1m9 0h1m9 0h1m9 0h1m10 0h1m9 0h1m9 0h1m9 0h1m9 0h1m9 0h1m9 0h1m9 0h1m9 0h1m9 0h1m9 0h1m9 0h1m9 0h1m9 0h1m9 0h1m9 0h1m10 0h1m9 0h1m9 0h1m9 0h1m9 0h1m9 0h1m9 0h1m9 0h1m9 0h1m9 0h1m9 0h1m9 0h1m9 0h1m9 0h1m9 0h1m9 0h1m9 0h1m10 0h1m9 0h1m9 0h1m9 0h1m9 0h1m9 0h1m9 0h1M407 686.5h1m9 0h1m9 0h1m9 0h1m9 0h1m9 0h1m10 0h1m9 0h1m9 0h1m9 0h1m9 0h1m9 0h1m9 0h1m9 0h1m9 0h1m9 0h1m9 0h1m9 0h1m9 0h1m9 0h1m9 0h1m9 0h1m9 0h1m10 0h1m9 0h1m9 0h1m9 0h1m9 0h1m9 0h1m9 0h1m9 0h1m9 0h1m9 0h1m9 0h1m9 0h1m9 0h1m9 0h1m9 0h1m9 0h1m9 0h1m10 0h1m9 0h1m9 0h1m9 0h1m9 0h1m9 0h1m9 0h1m9 0h1m9 0h1m9 0h1m9 0h1m9 0h1m9 0h1m9 0h1m9 0h1m9 0h1m9 0h1m10 0h1m9 0h1m9 0h1m9 0h1m9 0h1m9 0h1m9 0h1m9 0h1m9 0h1m9 0h1m9 0h1m9 0h1m9 0h1m9 0h1m9 0h1m9 0h1m10 0h1m9 0h1m9 0h1m9 0h1m9 0h1m9 0h1m9 0h1m9 0h1m9 0h1m9 0h1m9 0h1m9 0h1m9 0h1m9 0h1m9 0h1m9 0h1m9 0h1m10 0h1m9 0h1m9 0h1m9 0h1m9 0h1m9 0h1m9 0h1M407 696.5h1m9 0h1m9 0h1m9 0h1m9 0h1m9 0h1m10 0h1m9 0h1m9 0h1m9 0h1m9 0h1m9 0h1m9 0h1m9 0h1m9 0h1m9 0h1m9 0h1m9 0h1m9 0h1m9 0h1m9 0h1m9 0h1m9 0h1m10 0h1m9 0h1m9 0h1m9 0h1m9 0h1m9 0h1m9 0h1m9 0h1m9 0h1m9 0h1m9 0h1m9 0h1m9 0h1m9 0h1m9 0h1m9 0h1m9 0h1m10 0h1m9 0h1m9 0h1m9 0h1m9 0h1m9 0h1m9 0h1m9 0h1m9 0h1m9 0h1m9 0h1m9 0h1m9 0h1m9 0h1m9 0h1m9 0h1m9 0h1m10 0h1m9 0h1m9 0h1m9 0h1m9 0h1m9 0h1m9 0h1m9 0h1m9 0h1m9 0h1m9 0h1m9 0h1m9 0h1m9 0h1m9 0h1m9 0h1m10 0h1m9 0h1m9 0h1m9 0h1m9 0h1m9 0h1m9 0h1m9 0h1m9 0h1m9 0h1m9 0h1m9 0h1m9 0h1m9 0h1m9 0h1m9 0h1m9 0h1m10 0h1m9 0h1m9 0h1m9 0h1m9 0h1m9 0h1m9 0h1M407 706.5h1m9 0h1m9 0h1m9 0h1m9 0h1m9 0h1m10 0h1m9 0h1m9 0h1m9 0h1m9 0h1m9 0h1m9 0h1m9 0h1m9 0h1m9 0h1m9 0h1m9 0h1m9 0h1m9 0h1m9 0h1m9 0h1m9 0h1m10 0h1m9 0h1m9 0h1m9 0h1m9 0h1m9 0h1m9 0h1m9 0h1m9 0h1m9 0h1m9 0h1m9 0h1m9 0h1m9 0h1m9 0h1m9 0h1m9 0h1m10 0h1m9 0h1m9 0h1m9 0h1m9 0h1m9 0h1m9 0h1m9 0h1m9 0h1m9 0h1m9 0h1m9 0h1m9 0h1m9 0h1m9 0h1m9 0h1m9 0h1m10 0h1m9 0h1m9 0h1m9 0h1m9 0h1m9 0h1m9 0h1m9 0h1m9 0h1m9 0h1m9 0h1m9 0h1m9 0h1m9 0h1m9 0h1m9 0h1m10 0h1m9 0h1m9 0h1m9 0h1m9 0h1m9 0h1m9 0h1m9 0h1m9 0h1m9 0h1m9 0h1m9 0h1m9 0h1m9 0h1m9 0h1m9 0h1m9 0h1m10 0h1m9 0h1m9 0h1m9 0h1m9 0h1m9 0h1m9 0h1M407 716.5h1m9 0h1m9 0h1m9 0h1m9 0h1m9 0h1m10 0h1m9 0h1m9 0h1m9 0h1m9 0h1m9 0h1m9 0h1m9 0h1m9 0h1m9 0h1m9 0h1m9 0h1m9 0h1m9 0h1m9 0h1m9 0h1m9 0h1m10 0h1m9 0h1m9 0h1m9 0h1m9 0h1m9 0h1m9 0h1m9 0h1m9 0h1m9 0h1m9 0h1m9 0h1m9 0h1m9 0h1m9 0h1m9 0h1m9 0h1m10 0h1m9 0h1m9 0h1m9 0h1m9 0h1m9 0h1m9 0h1m9 0h1m9 0h1m9 0h1m9 0h1m9 0h1m9 0h1m9 0h1m9 0h1m9 0h1m9 0h1m10 0h1m9 0h1m9 0h1m9 0h1m9 0h1m9 0h1m9 0h1m9 0h1m9 0h1m9 0h1m9 0h1m9 0h1m9 0h1m9 0h1m9 0h1m9 0h1m10 0h1m9 0h1m9 0h1m9 0h1m9 0h1m9 0h1m9 0h1m9 0h1m9 0h1m9 0h1m9 0h1m9 0h1m9 0h1m9 0h1m9 0h1m9 0h1m9 0h1m10 0h1m9 0h1m9 0h1m9 0h1m9 0h1m9 0h1m9 0h1M407 726.5h1m9 0h1m9 0h1m9 0h1m9 0h1m9 0h1m10 0h1m9 0h1m9 0h1m9 0h1m9 0h1m9 0h1m9 0h1m9 0h1m9 0h1m9 0h1m9 0h1m9 0h1m9 0h1m9 0h1m9 0h1m9 0h1m9 0h1m10 0h1m9 0h1m9 0h1m9 0h1m9 0h1m9 0h1m9 0h1m9 0h1m9 0h1m9 0h1m9 0h1m9 0h1m9 0h1m9 0h1m9 0h1m9 0h1m9 0h1m10 0h1m9 0h1m9 0h1m9 0h1m9 0h1m9 0h1m9 0h1m9 0h1m9 0h1m9 0h1m9 0h1m9 0h1m9 0h1m9 0h1m9 0h1m9 0h1m9 0h1m10 0h1m9 0h1m9 0h1m9 0h1m9 0h1m9 0h1m9 0h1m9 0h1m9 0h1m9 0h1m9 0h1m9 0h1m9 0h1m9 0h1m9 0h1m9 0h1m10 0h1m9 0h1m9 0h1m9 0h1m9 0h1m9 0h1m9 0h1m9 0h1m9 0h1m9 0h1m9 0h1m9 0h1m9 0h1m9 0h1m9 0h1m9 0h1m9 0h1m10 0h1m9 0h1m9 0h1m9 0h1m9 0h1m9 0h1m9 0h1M407 736.5h1m9 0h1m9 0h1m9 0h1m9 0h1m9 0h1m10 0h1m9 0h1m9 0h1m9 0h1m9 0h1m9 0h1m9 0h1m9 0h1m9 0h1m9 0h1m9 0h1m9 0h1m9 0h1m9 0h1m9 0h1m9 0h1m9 0h1m10 0h1m9 0h1m9 0h1m9 0h1m9 0h1m9 0h1m9 0h1m9 0h1m9 0h1m9 0h1m9 0h1m9 0h1m9 0h1m9 0h1m9 0h1m9 0h1m9 0h1m10 0h1m9 0h1m9 0h1m9 0h1m9 0h1m9 0h1m9 0h1m9 0h1m9 0h1m9 0h1m9 0h1m9 0h1m9 0h1m9 0h1m9 0h1m9 0h1m9 0h1m10 0h1m9 0h1m9 0h1m9 0h1m9 0h1m9 0h1m9 0h1m9 0h1m9 0h1m9 0h1m9 0h1m9 0h1m9 0h1m9 0h1m9 0h1m9 0h1m10 0h1m9 0h1m9 0h1m9 0h1m9 0h1m9 0h1m9 0h1m9 0h1m9 0h1m9 0h1m9 0h1m9 0h1m9 0h1m9 0h1m9 0h1m9 0h1m9 0h1m10 0h1m9 0h1m9 0h1m9 0h1m9 0h1m9 0h1m9 0h1M407 746.5h1m9 0h1m9 0h1m9 0h1m9 0h1m9 0h1m10 0h1m9 0h1m9 0h1m9 0h1m9 0h1m9 0h1m9 0h1m9 0h1m9 0h1m9 0h1m9 0h1m9 0h1m9 0h1m9 0h1m9 0h1m9 0h1m9 0h1m10 0h1m9 0h1m9 0h1m9 0h1m9 0h1m9 0h1m9 0h1m9 0h1m9 0h1m9 0h1m9 0h1m9 0h1m9 0h1m9 0h1m9 0h1m9 0h1m9 0h1m10 0h1m9 0h1m9 0h1m9 0h1m9 0h1m9 0h1m9 0h1m9 0h1m9 0h1m9 0h1m9 0h1m9 0h1m9 0h1m9 0h1m9 0h1m9 0h1m9 0h1m10 0h1m9 0h1m9 0h1m9 0h1m9 0h1m9 0h1m9 0h1m9 0h1m9 0h1m9 0h1m9 0h1m9 0h1m9 0h1m9 0h1m9 0h1m9 0h1m10 0h1m9 0h1m9 0h1m9 0h1m9 0h1m9 0h1m9 0h1m9 0h1m9 0h1m9 0h1m9 0h1m9 0h1m9 0h1m9 0h1m9 0h1m9 0h1m9 0h1m10 0h1m9 0h1m9 0h1m9 0h1m9 0h1m9 0h1m9 0h1M407 757.5h1m9 0h1m9 0h1m9 0h1m9 0h1m9 0h1m10 0h1m9 0h1m9 0h1m9 0h1m9 0h1m9 0h1m9 0h1m9 0h1m9 0h1m9 0h1m9 0h1m9 0h1m9 0h1m9 0h1m9 0h1m9 0h1m9 0h1m10 0h1m9 0h1m9 0h1m9 0h1m9 0h1m9 0h1m9 0h1m9 0h1m9 0h1m9 0h1m9 0h1m9 0h1m9 0h1m9 0h1m9 0h1m9 0h1m9 0h1m10 0h1m9 0h1m9 0h1m9 0h1m9 0h1m9 0h1m9 0h1m9 0h1m9 0h1m9 0h1m9 0h1m9 0h1m9 0h1m9 0h1m9 0h1m9 0h1m9 0h1m10 0h1m9 0h1m9 0h1m9 0h1m9 0h1m9 0h1m9 0h1m9 0h1m9 0h1m9 0h1m9 0h1m9 0h1m9 0h1m9 0h1m9 0h1m9 0h1m10 0h1m9 0h1m9 0h1m9 0h1m9 0h1m9 0h1m9 0h1m9 0h1m9 0h1m9 0h1m9 0h1m9 0h1m9 0h1m9 0h1m9 0h1m9 0h1m9 0h1m10 0h1m9 0h1m9 0h1m9 0h1m9 0h1m9 0h1m9 0h1M407 767.5h1m9 0h1m9 0h1m9 0h1m9 0h1m9 0h1m10 0h1m9 0h1m9 0h1m9 0h1m9 0h1m9 0h1m9 0h1m9 0h1m9 0h1m9 0h1m9 0h1m9 0h1m9 0h1m9 0h1m9 0h1m9 0h1m9 0h1m10 0h1m9 0h1m9 0h1m9 0h1m9 0h1m9 0h1m9 0h1m9 0h1m9 0h1m9 0h1m9 0h1m9 0h1m9 0h1m9 0h1m9 0h1m9 0h1m9 0h1m10 0h1m9 0h1m9 0h1m9 0h1m9 0h1m9 0h1m9 0h1m9 0h1m9 0h1m9 0h1m9 0h1m9 0h1m9 0h1m9 0h1m9 0h1m9 0h1m9 0h1m10 0h1m9 0h1m9 0h1m9 0h1m9 0h1m9 0h1m9 0h1m9 0h1m9 0h1m9 0h1m9 0h1m9 0h1m9 0h1m9 0h1m9 0h1m9 0h1m10 0h1m9 0h1m9 0h1m9 0h1m9 0h1m9 0h1m9 0h1m9 0h1m9 0h1m9 0h1m9 0h1m9 0h1m9 0h1m9 0h1m9 0h1m9 0h1m9 0h1m10 0h1m9 0h1m9 0h1m9 0h1m9 0h1m9 0h1m9 0h1M407 777.5h1m9 0h1m9 0h1m9 0h1m9 0h1m9 0h1m10 0h1m9 0h1m9 0h1m9 0h1m9 0h1m9 0h1m9 0h1m9 0h1m9 0h1m9 0h1m9 0h1m9 0h1m9 0h1m9 0h1m9 0h1m9 0h1m9 0h1m10 0h1m9 0h1m9 0h1m9 0h1m9 0h1m9 0h1m9 0h1m9 0h1m9 0h1m9 0h1m9 0h1m9 0h1m9 0h1m9 0h1m9 0h1m9 0h1m9 0h1m10 0h1m9 0h1m9 0h1m9 0h1m9 0h1m9 0h1m9 0h1m9 0h1m9 0h1m9 0h1m9 0h1m9 0h1m9 0h1m9 0h1m9 0h1m9 0h1m9 0h1m10 0h1m9 0h1m9 0h1m9 0h1m9 0h1m9 0h1m9 0h1m9 0h1m9 0h1m9 0h1m9 0h1m9 0h1m9 0h1m9 0h1m9 0h1m9 0h1m10 0h1m9 0h1m9 0h1m9 0h1m9 0h1m9 0h1m9 0h1m9 0h1m9 0h1m9 0h1m9 0h1m9 0h1m9 0h1m9 0h1m9 0h1m9 0h1m9 0h1m10 0h1m9 0h1m9 0h1m9 0h1m9 0h1m9 0h1m9 0h1M407 787.5h1m9 0h1m9 0h1m9 0h1m9 0h1m9 0h1m10 0h1m9 0h1m9 0h1m9 0h1m9 0h1m9 0h1m9 0h1m9 0h1m9 0h1m9 0h1m9 0h1m9 0h1m9 0h1m9 0h1m9 0h1m9 0h1m9 0h1m10 0h1m9 0h1m9 0h1m9 0h1m9 0h1m9 0h1m9 0h1m9 0h1m9 0h1m9 0h1m9 0h1m9 0h1m9 0h1m9 0h1m9 0h1m9 0h1m9 0h1m10 0h1m9 0h1m9 0h1m9 0h1m9 0h1m9 0h1m9 0h1m9 0h1m9 0h1m9 0h1m9 0h1m9 0h1m9 0h1m9 0h1m9 0h1m9 0h1m9 0h1m10 0h1m9 0h1m9 0h1m9 0h1m9 0h1m9 0h1m9 0h1m9 0h1m9 0h1m9 0h1m9 0h1m9 0h1m9 0h1m9 0h1m9 0h1m9 0h1m10 0h1m9 0h1m9 0h1m9 0h1m9 0h1m9 0h1m9 0h1m9 0h1m9 0h1m9 0h1m9 0h1m9 0h1m9 0h1m9 0h1m9 0h1m9 0h1m9 0h1m10 0h1m9 0h1m9 0h1m9 0h1m9 0h1m9 0h1m9 0h1M407 797.5h1m9 0h1m9 0h1m9 0h1m9 0h1m9 0h1m10 0h1m9 0h1m9 0h1m9 0h1m9 0h1m9 0h1m9 0h1m9 0h1m9 0h1m9 0h1m9 0h1m9 0h1m9 0h1m9 0h1m9 0h1m9 0h1m9 0h1m10 0h1m9 0h1m9 0h1m9 0h1m9 0h1m9 0h1m9 0h1m9 0h1m9 0h1m9 0h1m9 0h1m9 0h1m9 0h1m9 0h1m9 0h1m9 0h1m9 0h1m10 0h1m9 0h1m9 0h1m9 0h1m9 0h1m9 0h1m9 0h1m9 0h1m9 0h1m9 0h1m9 0h1m9 0h1m9 0h1m9 0h1m9 0h1m9 0h1m9 0h1m10 0h1m9 0h1m9 0h1m9 0h1m9 0h1m9 0h1m9 0h1m9 0h1m9 0h1m9 0h1m9 0h1m9 0h1m9 0h1m9 0h1m9 0h1m9 0h1m10 0h1m9 0h1m9 0h1m9 0h1m9 0h1m9 0h1m9 0h1m9 0h1m9 0h1m9 0h1m9 0h1m9 0h1m9 0h1m9 0h1m9 0h1m9 0h1m9 0h1m10 0h1m9 0h1m9 0h1m9 0h1m9 0h1m9 0h1m9 0h1M407 807.5h1m9 0h1m9 0h1m9 0h1m9 0h1m9 0h1m10 0h1m9 0h1m9 0h1m9 0h1m9 0h1m9 0h1m9 0h1m9 0h1m9 0h1m9 0h1m9 0h1m9 0h1m9 0h1m9 0h1m9 0h1m9 0h1m9 0h1m10 0h1m9 0h1m9 0h1m9 0h1m9 0h1m9 0h1m9 0h1m9 0h1m9 0h1m9 0h1m9 0h1m9 0h1m9 0h1m9 0h1m9 0h1m9 0h1m9 0h1m10 0h1m9 0h1m9 0h1m9 0h1m9 0h1m9 0h1m9 0h1m9 0h1m9 0h1m9 0h1m9 0h1m9 0h1m9 0h1m9 0h1m9 0h1m9 0h1m9 0h1m10 0h1m9 0h1m9 0h1m9 0h1m9 0h1m9 0h1m9 0h1m9 0h1m9 0h1m9 0h1m9 0h1m9 0h1m9 0h1m9 0h1m9 0h1m9 0h1m10 0h1m9 0h1m9 0h1m9 0h1m9 0h1m9 0h1m9 0h1m9 0h1m9 0h1m9 0h1m9 0h1m9 0h1m9 0h1m9 0h1m9 0h1m9 0h1m9 0h1m10 0h1m9 0h1m9 0h1m9 0h1m9 0h1m9 0h1m9 0h1M407 817.5h1m9 0h1m9 0h1m9 0h1m9 0h1m9 0h1m10 0h1m9 0h1m9 0h1m9 0h1m9 0h1m9 0h1m9 0h1m9 0h1m9 0h1m9 0h1m9 0h1m9 0h1m9 0h1m9 0h1m9 0h1m9 0h1m9 0h1m10 0h1m9 0h1m9 0h1m9 0h1m9 0h1m9 0h1m9 0h1m9 0h1m9 0h1m9 0h1m9 0h1m9 0h1m9 0h1m9 0h1m9 0h1m9 0h1m9 0h1m10 0h1m9 0h1m9 0h1m9 0h1m9 0h1m9 0h1m9 0h1m9 0h1m9 0h1m9 0h1m9 0h1m9 0h1m9 0h1m9 0h1m9 0h1m9 0h1m9 0h1m10 0h1m9 0h1m9 0h1m9 0h1m9 0h1m9 0h1m9 0h1m9 0h1m9 0h1m9 0h1m9 0h1m9 0h1m9 0h1m9 0h1m9 0h1m9 0h1m10 0h1m9 0h1m9 0h1m9 0h1m9 0h1m9 0h1m9 0h1m9 0h1m9 0h1m9 0h1m9 0h1m9 0h1m9 0h1m9 0h1m9 0h1m9 0h1m9 0h1m10 0h1m9 0h1m9 0h1m9 0h1m9 0h1m9 0h1m9 0h1" stroke="#000" stroke-width="1" fill="none" class="ce"/>
<path d="M382.5 158.5H1390M402.5 178.5H1390M382.5 158.5V873M402.5 158.5V821.5M462.5 158.5V178.5M523.5 158.5V178.5M583.5 158.5V178.5M643.5 158.5V178.5M704.5 158.5V178.5M764.5 158.5V178.5M824.5 158.5V178.5M885.5 158.5V178.5M945.5 158.5V178.5M1005.5 158.5V178.5M1066.5 158.5V178.5M1126.5 158.5V178.5M1186.5 158.5V178.5M1247.5 158.5V178.5M1307.5 158.5V178.5M1367.5 158.5V178.5M1428.5 158.5V178.5M382.5 258.5H402.5M382.5 339.5H402.5M382.5 419.5H402.5M382.5 500.5H402.5M382.5 580.5H402.5M382.5 660.5H402.5M382.5 741.5H402.5M382.5 821.5H402.5M382.5 821.5H1390M382.5 847.5H612.5M1197.5 847.5H1390M382.5 872.5H1390M612.5 821.5V872.5M1197.5 821.5V872.5" stroke="#111" stroke-width="1.15" fill="none" class="ce"/>
<text x="432.7" y="174" font-size="15" fill="#000" text-anchor="middle">1</text>
<text x="493.0" y="174" font-size="15" fill="#000" text-anchor="middle">2</text>
<text x="553.3" y="174" font-size="15" fill="#000" text-anchor="middle">3</text>
<text x="613.7" y="174" font-size="15" fill="#000" text-anchor="middle">4</text>
<text x="674.0" y="174" font-size="15" fill="#000" text-anchor="middle">5</text>
<text x="734.3" y="174" font-size="15" fill="#000" text-anchor="middle">6</text>
<text x="794.6" y="174" font-size="15" fill="#000" text-anchor="middle">7</text>
<text x="855.0" y="174" font-size="15" fill="#000" text-anchor="middle">8</text>
<text x="915.3" y="174" font-size="15" fill="#000" text-anchor="middle">9</text>
<text x="975.6" y="174" font-size="15" fill="#000" text-anchor="middle">10</text>
<text x="1036.0" y="174" font-size="15" fill="#000" text-anchor="middle">11</text>
<text x="1096.3" y="174" font-size="15" fill="#000" text-anchor="middle">12</text>
<text x="1156.6" y="174" font-size="15" fill="#000" text-anchor="middle">13</text>
<text x="1217.0" y="174" font-size="15" fill="#000" text-anchor="middle">14</text>
<text x="1277.3" y="174" font-size="15" fill="#000" text-anchor="middle">15</text>
<text x="1337.6" y="174" font-size="15" fill="#000" text-anchor="middle">16</text>
<text x="392.2" y="223.4" font-size="15" fill="#000" text-anchor="middle">A</text>
<text x="392.2" y="303.9" font-size="15" fill="#000" text-anchor="middle">B</text>
<text x="392.2" y="384.3" font-size="15" fill="#000" text-anchor="middle">C</text>
<text x="392.2" y="464.7" font-size="15" fill="#000" text-anchor="middle">D</text>
<text x="392.2" y="545.2" font-size="15" fill="#000" text-anchor="middle">E</text>
<text x="392.2" y="625.6" font-size="15" fill="#000" text-anchor="middle">F</text>
<text x="392.2" y="706.1" font-size="15" fill="#000" text-anchor="middle">G</text>
<text x="392.2" y="786.5" font-size="15" fill="#000" text-anchor="middle">H</text>
<text x="387" y="840" font-size="14.5" fill="#000" textLength="47.5" lengthAdjust="spacingAndGlyphs">Author:</text>
<text x="387" y="865" font-size="14.5" fill="#000" textLength="35.5" lengthAdjust="spacingAndGlyphs">Date:</text>
<text x="1202" y="840" font-size="14.5" fill="#000" textLength="26.3" lengthAdjust="spacingAndGlyphs">File:</text>
<text x="1202" y="865" font-size="14.5" fill="#000" textLength="63" lengthAdjust="spacingAndGlyphs">Folio: 1/2</text>
<line x1="496.7" y1="243.5" x2="1162.5" y2="243.5" stroke="#000" stroke-width="1.1"/>
<path d="M486.5 239.5v8l10.2-4z" stroke="#000" stroke-width="1.2" fill="#fff"/>
<path d="M1162.5 239.5v8l11-4z" stroke="#000" stroke-width="1.2" fill="#fff"/>
<line x1="496.5" y1="243.5" x2="500" y2="243.5" stroke="#c8303c" stroke-width="1.3"/>
<line x1="1158.5" y1="243.5" x2="1162.5" y2="243.5" stroke="#c8303c" stroke-width="1.3"/>
<text x="815.8" y="261.3" font-size="12" fill="#000" textLength="25.5" lengthAdjust="spacingAndGlyphs">C1/9</text>
<line x1="588.5" y1="243.5" x2="588.5" y2="354.4" stroke="#000" stroke-width="1.1"/>
<line x1="583.1" y1="353.9" x2="588.5" y2="374" stroke="#000" stroke-width="1.2"/>
<line x1="588.5" y1="374" x2="588.5" y2="512" stroke="#000" stroke-width="1.1"/>
<path d="M574.8 359v10.6M574.8 359c-6 1-6 9.6 0 10.6" stroke="#333" stroke-width="1.2" fill="none"/>
<path d="M574.8 364.3h3.2l1.5-2.2 2.3 2.4h3" stroke="#333" stroke-width="1" fill="none"/>
<text x="0" y="0" font-size="12" fill="#000" text-anchor="middle" textLength="23.8" lengthAdjust="spacingAndGlyphs" transform="translate(600.9 444.4) rotate(-90)" dy="0.36em">C1/9</text>
<path d="M588.5 512V516h5.8" stroke="#000" stroke-width="1.2" fill="none"/>
<line x1="593.8" y1="516.3" x2="588.5" y2="535.5" stroke="#000" stroke-width="1.2"/>
<line x1="588.5" y1="535.5" x2="588.5" y2="546.2" stroke="#000" stroke-width="1.1"/>
<path d="M581.3 520.6h-3.6v9.6h3.6M577.7 525.3h3.2M582 525.3h3.8" stroke="#222" stroke-width="1.1" fill="none"/>
<rect x="745.5" y="396.5" width="28" height="16" fill="none" stroke="#000" stroke-width="1.4"/>
<line x1="759.5" y1="383.3" x2="759.5" y2="396.5" stroke="#000" stroke-width="1.1"/>
<text x="765" y="389.8" font-size="6" fill="#333" textLength="7.2" lengthAdjust="spacingAndGlyphs">A1</text>
<line x1="759.5" y1="412.5" x2="759.5" y2="625.5" stroke="#000" stroke-width="1.1"/>
<text x="765" y="425.8" font-size="6" fill="#333" textLength="7.5" lengthAdjust="spacingAndGlyphs">A2</text>
<text x="788.9" y="412.8" font-size="15" fill="#000" textLength="31.1" lengthAdjust="spacingAndGlyphs">km 1</text>
<text x="0" y="0" font-size="12" fill="#000" text-anchor="middle" textLength="31.5" lengthAdjust="spacingAndGlyphs" transform="translate(771.2 520.5) rotate(-90)" dy="0.36em">C1/11</text>
<rect x="736.8" y="625.5" width="37.5" height="20" fill="none" stroke="#000" stroke-width="1.4"/>
<path d="M744 625.5v20M736.8 635.5h7.2" stroke="#000" stroke-width="1.3" fill="none"/>
<text x="749.2" y="620.5" font-size="6" fill="#333" textLength="7" lengthAdjust="spacingAndGlyphs">A1</text>
<text x="749.2" y="656" font-size="6" fill="#333" textLength="7" lengthAdjust="spacingAndGlyphs">A2</text>
<line x1="759.5" y1="645.5" x2="759.5" y2="656" stroke="#000" stroke-width="1.1"/>
<path d="M744 607.2h40c5 0 9 4 9 9v40c0 5-4 9-9 9h-40c-5 0-9-4-9-9v-40c0-5 4-9 9-9z" stroke="#8a8a8a" stroke-width="0.8" fill="none" stroke-dasharray="4 2.5 1 2.5"/>
<text x="779.1" y="641.6" font-size="15" fill="#000" textLength="32.4" lengthAdjust="spacingAndGlyphs">km 3</text>
<line x1="960.5" y1="400" x2="960.5" y2="404.7" stroke="#000" stroke-width="1.1"/>
<line x1="955.3" y1="404.2" x2="960.5" y2="423.3" stroke="#000" stroke-width="1.2"/>
<line x1="960.5" y1="423.3" x2="960.5" y2="536.4" stroke="#000" stroke-width="1.1"/>
<text x="972" y="399.7" font-size="8" fill="#333" textLength="21.9" lengthAdjust="spacingAndGlyphs">(1-C6)</text>
<text x="967.8" y="422.8" font-size="15" fill="#000" textLength="31.4" lengthAdjust="spacingAndGlyphs">km 1</text>
<text x="0" y="0" font-size="12" fill="#000" text-anchor="middle" textLength="32" lengthAdjust="spacingAndGlyphs" transform="translate(973 479.9) rotate(-90)" dy="0.36em">C1/10</text>
<path d="M960.5 536.4h6.3" stroke="#000" stroke-width="1.3" fill="none"/>
<line x1="965.5" y1="537" x2="960.5" y2="554.2" stroke="#000" stroke-width="1.2"/>
<line x1="960.5" y1="554.2" x2="960.5" y2="656.7" stroke="#000" stroke-width="1.1"/>
<text x="975.8" y="530.5" font-size="8" fill="#333" textLength="21.2" lengthAdjust="spacingAndGlyphs">(2-E8)</text>
<text x="970.8" y="553.9" font-size="15" fill="#000" textLength="32" lengthAdjust="spacingAndGlyphs">km 2</text>
<text x="0" y="0" font-size="12" fill="#000" text-anchor="middle" textLength="31.5" lengthAdjust="spacingAndGlyphs" transform="translate(972.7 605.5) rotate(-90)" dy="0.36em">C1/15</text>
<line x1="955.3" y1="655.6" x2="960.5" y2="676.1" stroke="#000" stroke-width="1.2"/>
<line x1="960.5" y1="676.1" x2="960.5" y2="686.7" stroke="#000" stroke-width="1.1"/>
<text x="951.5" y="652" font-size="7" fill="#1a1a1a" textLength="6.3" lengthAdjust="spacingAndGlyphs">11</text>
<text x="951.5" y="684.7" font-size="7" fill="#1a1a1a" textLength="6.3" lengthAdjust="spacingAndGlyphs">14</text>
<path d="M942.5 658.6V662.3H947.8V668.7H942.5V673.3" stroke="#555" stroke-width="1.1" fill="none"/>
<path d="M948 665.5h2.5M952 665.5h5" stroke="#555" stroke-width="1.1" fill="none"/>
<text x="970.8" y="648.6" font-size="8" fill="#333" textLength="21.2" lengthAdjust="spacingAndGlyphs">(1-F6)</text>
<text x="966.1" y="671.7" font-size="15" fill="#000" textLength="31.1" lengthAdjust="spacingAndGlyphs">km 3</text>
<path d="M1161.5 394.6V405.3h6.6" stroke="#000" stroke-width="1.3" fill="none"/>
<circle cx="1167.8" cy="403.6" r="1.3" fill="#000"/>
<line x1="1167.5" y1="406" x2="1161.5" y2="424.4" stroke="#000" stroke-width="1.2"/>
<text x="1152" y="400.8" font-size="7" fill="#1a1a1a" textLength="7" lengthAdjust="spacingAndGlyphs">21</text>
<text x="1152" y="432.8" font-size="7" fill="#1a1a1a" textLength="7" lengthAdjust="spacingAndGlyphs">22</text>
<text x="1179.2" y="396.7" font-size="8" fill="#333" textLength="21.4" lengthAdjust="spacingAndGlyphs">(1-C6)</text>
<text x="1173.9" y="420.8" font-size="15" fill="#000" textLength="30.8" lengthAdjust="spacingAndGlyphs">km 1</text>
<line x1="1161.5" y1="424.4" x2="1161.5" y2="526.6" stroke="#000" stroke-width="1.1"/>
<text x="0" y="0" font-size="12" fill="#000" text-anchor="middle" textLength="33" lengthAdjust="spacingAndGlyphs" transform="translate(1173.3 480.5) rotate(-90)" dy="0.36em">C1/13</text>
<path d="M1161.5 526.5999999999999V535.8h6.6" stroke="#000" stroke-width="1.3" fill="none"/>
<line x1="1167.6" y1="536.0999999999999" x2="1161.5" y2="554.6999999999999" stroke="#000" stroke-width="1.2"/>
<text x="1152.3" y="531.6999999999999" font-size="7" fill="#1a1a1a" textLength="6.5" lengthAdjust="spacingAndGlyphs">11</text>
<text x="1152.3" y="563.9" font-size="7" fill="#1a1a1a" textLength="6.5" lengthAdjust="spacingAndGlyphs">12</text>
<path d="M1143.3 537.8V542.1999999999999L1146.1 545.3L1143.3 548.3V552.8" stroke="#222" stroke-width="1.1" fill="none"/>
<path d="M1146 545.3h3.5M1152 545.3h3.5M1158 545.3h3" stroke="#222" stroke-width="1.1" fill="none"/>
<text x="1173.3" y="550.8" font-size="15" fill="#000" textLength="19.7" lengthAdjust="spacingAndGlyphs">c 4</text>
<line x1="1161.5" y1="554.7" x2="1161.5" y2="637.5" stroke="#000" stroke-width="1.1"/>
<text x="0" y="0" font-size="12" fill="#000" text-anchor="middle" textLength="33" lengthAdjust="spacingAndGlyphs" transform="translate(1173.3 600) rotate(-90)" dy="0.36em">C1/14</text>
<path d="M1161.5 637.1999999999999V646.4h6.6" stroke="#000" stroke-width="1.3" fill="none"/>
<line x1="1167.6" y1="646.6999999999999" x2="1161.5" y2="665.3" stroke="#000" stroke-width="1.2"/>
<text x="1152.3" y="642.3" font-size="7" fill="#1a1a1a" textLength="6.5" lengthAdjust="spacingAndGlyphs">11</text>
<text x="1152.3" y="674.5" font-size="7" fill="#1a1a1a" textLength="6.5" lengthAdjust="spacingAndGlyphs">12</text>
<path d="M1143.3 648.4V652.8L1146.1 655.9L1143.3 658.9V663.4" stroke="#222" stroke-width="1.1" fill="none"/>
<path d="M1146 655.9h3.5M1152 655.9h3.5M1158 655.9h3" stroke="#222" stroke-width="1.1" fill="none"/>
<text x="1173.3" y="661.4" font-size="15" fill="#000" textLength="19.7" lengthAdjust="spacingAndGlyphs">c 7</text>
<line x1="1161.5" y1="665.3" x2="1161.5" y2="675.5" stroke="#000" stroke-width="1.1"/>
<rect x="1257.2" y="369.3" width="70.6" height="80.3" fill="none" stroke="#000" stroke-width="1.6"/>
<rect x="1262.5" y="389.5" width="20.3" height="15.8" fill="none" stroke="#000" stroke-width="1.2"/>
<path d="M1262.5 374.5v12h5.5M1272.5 374.5v6l-3 5.5M1282.8 374.5v12h-5.5" stroke="#000" stroke-width="1.1" fill="none"/>
<circle cx="1268.0" cy="386" r="1.3" fill="#000"/><circle cx="1277.0" cy="386" r="1.3" fill="#000"/>
<rect x="1292.5" y="389.5" width="20.3" height="15.8" fill="none" stroke="#000" stroke-width="1.2"/>
<path d="M1292.5 374.5v12h5.5M1302.5 374.5v6l-3 5.5M1312.8 374.5v12h-5.5" stroke="#000" stroke-width="1.1" fill="none"/>
<circle cx="1298.0" cy="386" r="1.3" fill="#000"/><circle cx="1307.0" cy="386" r="1.3" fill="#000"/>
<text x="1265.8" y="401.3" font-size="11.5" fill="#000" textLength="14" lengthAdjust="spacingAndGlyphs">R1</text>
<text x="1295.8" y="401.3" font-size="11.5" fill="#000" textLength="14" lengthAdjust="spacingAndGlyphs">R2</text>
<text x="0" y="0" font-size="10" fill="#000" text-anchor="middle" textLength="35.5" lengthAdjust="spacingAndGlyphs" transform="translate(1320.3 392) rotate(-90)" dy="0.36em">2 Relays</text>
<text x="1292.8" y="417" font-size="8.5" fill="#000" textLength="24.4" lengthAdjust="spacingAndGlyphs">JD-Vcc</text>
<line x1="1318" y1="415" x2="1323.5" y2="415" stroke="#c8303c" stroke-width="1.2"/>
<text x="1303" y="426.7" font-size="8.5" fill="#000" textLength="13.2" lengthAdjust="spacingAndGlyphs">Vcc</text>
<line x1="1318" y1="424.3" x2="1323.5" y2="424.3" stroke="#c8303c" stroke-width="1.2"/>
<text x="0" y="0" font-size="8.5" fill="#000" text-anchor="start" textLength="15" lengthAdjust="spacingAndGlyphs" transform="translate(1265.2 439) rotate(-90)">GND</text>
<text x="0" y="0" font-size="8.5" fill="#000" text-anchor="start" textLength="10.5" lengthAdjust="spacingAndGlyphs" transform="translate(1275.2 439) rotate(-90)">In1</text>
<text x="0" y="0" font-size="8.5" fill="#000" text-anchor="start" textLength="10.5" lengthAdjust="spacingAndGlyphs" transform="translate(1285.2 439) rotate(-90)">In2</text>
<text x="0" y="0" font-size="8.5" fill="#000" text-anchor="start" textLength="12" lengthAdjust="spacingAndGlyphs" transform="translate(1295.2 439) rotate(-90)">Vcc</text>
<text x="1268.3" y="464.9" font-size="15" fill="#000" textLength="20" lengthAdjust="spacingAndGlyphs">c 6</text>
<line x1="1292.5" y1="440" x2="1292.5" y2="526.9" stroke="#000" stroke-width="1.1"/>
<text x="0" y="0" font-size="12" fill="#000" text-anchor="middle" textLength="33" lengthAdjust="spacingAndGlyphs" transform="translate(1304.7 485.1) rotate(-90)" dy="0.36em">C1/16</text>
<text x="1304.7" y="528.5" font-size="8" fill="#333" textLength="21.3" lengthAdjust="spacingAndGlyphs">(1-F6)</text>
<line x1="1287.3" y1="534.7" x2="1292.5" y2="556.8" stroke="#000" stroke-width="1.2"/>
<line x1="1292.5" y1="556.8" x2="1292.5" y2="626.7" stroke="#000" stroke-width="1.1"/>
<text x="1299" y="553.6" font-size="15" fill="#000" textLength="32.4" lengthAdjust="spacingAndGlyphs">km 3</text>
<text x="0" y="0" font-size="12" fill="#000" text-anchor="middle" textLength="31.5" lengthAdjust="spacingAndGlyphs" transform="translate(1304.7 591.4) rotate(-90)" dy="0.36em">C1/17</text>
<line x1="1287.1" y1="625.2" x2="1292.5" y2="645.9" stroke="#000" stroke-width="1.2"/>
<line x1="1292.5" y1="645.9" x2="1292.5" y2="717" stroke="#000" stroke-width="1.1"/>
<path d="M1301 645.5h6.4M1303.2 643.8v1.7" stroke="#000" stroke-width="1.1" fill="none"/>
<text x="0" y="0" font-size="12" fill="#000" text-anchor="middle" textLength="31.8" lengthAdjust="spacingAndGlyphs" transform="translate(1304.8 681.1) rotate(-90)" dy="0.36em">C1/18</text>
<path d="M1292.5 717h5.5" stroke="#000" stroke-width="1.2" fill="none"/>
<line x1="1297.5" y1="717.5" x2="1292.5" y2="735.6" stroke="#000" stroke-width="1.2"/>
<line x1="1292.5" y1="735.6" x2="1292.5" y2="746.7" stroke="#000" stroke-width="1.1"/>
<path d="M1303 735.6h6.6M1303.2 733.8v1.8" stroke="#000" stroke-width="1.1" fill="none"/>
<path d="M733.2 788.3h8.3M750 788.3h8.3M741.5 791.8l9-3.5" stroke="#6a6a6a" stroke-width="1.1" fill="none"/>
<text x="763.3" y="791.0" font-size="8" fill="#000" textLength="19.5" lengthAdjust="spacingAndGlyphs">1-C10</text>
<path d="M733.2 798.2h8.3M750 798.2h8.3M741.5 801.7l9-3.5" stroke="#6a6a6a" stroke-width="1.1" fill="none"/>
<text x="763.3" y="800.9000000000001" font-size="8" fill="#000" textLength="23.4" lengthAdjust="spacingAndGlyphs">1-4C-EB35</text>
<path d="M733.2 808.2h8.3M750 808.2h8.3M741.5 811.7l9-3.5" stroke="#6a6a6a" stroke-width="1.1" fill="none"/>
<text x="763.3" y="810.9000000000001" font-size="8" fill="#000" textLength="25" lengthAdjust="spacingAndGlyphs">2-4C-G10</text>
<path d="M739.5 798.2l2-2.5 2 2.5h2.5l3 1M739.5 808.2l2-2.5 2 2.5h2.5l3 1M744.5 811l3-3" stroke="#6a6a6a" stroke-width="0.8" fill="none"/>
<rect x="1171.5" y="769.5" width="137" height="27" fill="#000" opacity="0.06"/>
<rect x="1171.5" y="769.5" width="136" height="26" fill="#000" opacity="0.08"/>
<rect x="1171.5" y="769.5" width="135" height="25" fill="#000" opacity="0.1"/>
<rect x="1170.5" y="768.5" width="135" height="24" fill="#ffffff" stroke="#8a8a8a" stroke-width="1" class="ce"/>
<text x="1177" y="787" font-size="14" fill="#555" textLength="122.5" lengthAdjust="spacingAndGlyphs">(Dev) X: 791 Y: 599</text>
<line x1="588.5" y1="344.6" x2="588.5" y2="353.4" stroke="#c8303c" stroke-width="1.05"/>
<line x1="588.5" y1="378.9" x2="588.5" y2="383.5" stroke="#c8303c" stroke-width="1.05"/>
<line x1="588.5" y1="505" x2="588.5" y2="512" stroke="#c8303c" stroke-width="1.05"/>
<line x1="588.5" y1="536.5" x2="588.5" y2="546.2" stroke="#c8303c" stroke-width="1.05"/>
<line x1="759.5" y1="383.3" x2="759.5" y2="390.8" stroke="#c8303c" stroke-width="1.05"/>
<line x1="759.5" y1="420.6" x2="759.5" y2="425.2" stroke="#c8303c" stroke-width="1.05"/>
<line x1="759.5" y1="615.6" x2="759.5" y2="620.5" stroke="#c8303c" stroke-width="1.05"/>
<line x1="759.5" y1="650" x2="759.5" y2="656" stroke="#c8303c" stroke-width="1.05"/>
<line x1="960.5" y1="394.2" x2="960.5" y2="400" stroke="#c8303c" stroke-width="1.05"/>
<line x1="960.5" y1="428.9" x2="960.5" y2="433.9" stroke="#c8303c" stroke-width="1.05"/>
<line x1="960.5" y1="525.6" x2="960.5" y2="530" stroke="#c8303c" stroke-width="1.05"/>
<line x1="960.5" y1="559.7" x2="960.5" y2="565" stroke="#c8303c" stroke-width="1.05"/>
<line x1="960.5" y1="646.1" x2="960.5" y2="652" stroke="#c8303c" stroke-width="1.05"/>
<line x1="960.5" y1="681.7" x2="960.5" y2="686.7" stroke="#c8303c" stroke-width="1.05"/>
<line x1="1161.5" y1="394.6" x2="1161.5" y2="400.5" stroke="#c8303c" stroke-width="1.05"/>
<line x1="1161.5" y1="428" x2="1161.5" y2="433" stroke="#c8303c" stroke-width="1.05"/>
<line x1="1161.5" y1="526.5999999999999" x2="1161.5" y2="531.6999999999999" stroke="#c8303c" stroke-width="1.05"/>
<line x1="1161.5" y1="559.0" x2="1161.5" y2="564.0" stroke="#c8303c" stroke-width="1.05"/>
<line x1="1161.5" y1="637.1999999999999" x2="1161.5" y2="642.3" stroke="#c8303c" stroke-width="1.05"/>
<line x1="1161.5" y1="669.6" x2="1161.5" y2="674.6" stroke="#c8303c" stroke-width="1.05"/>
<line x1="1262.5" y1="374.5" x2="1262.5" y2="378" stroke="#c8303c" stroke-width="1.05"/>
<line x1="1272.5" y1="374.5" x2="1272.5" y2="378" stroke="#c8303c" stroke-width="1.05"/>
<line x1="1282.8" y1="374.5" x2="1282.8" y2="378" stroke="#c8303c" stroke-width="1.05"/>
<line x1="1292.5" y1="374.5" x2="1292.5" y2="378" stroke="#c8303c" stroke-width="1.05"/>
<line x1="1302.5" y1="374.5" x2="1302.5" y2="378" stroke="#c8303c" stroke-width="1.05"/>
<line x1="1312.8" y1="374.5" x2="1312.8" y2="378" stroke="#c8303c" stroke-width="1.05"/>
<line x1="1262.2" y1="440.4" x2="1262.2" y2="445.5" stroke="#c8303c" stroke-width="1.05"/>
<line x1="1272.2" y1="440.4" x2="1272.2" y2="445.5" stroke="#c8303c" stroke-width="1.05"/>
<line x1="1282.2" y1="440.4" x2="1282.2" y2="445.5" stroke="#c8303c" stroke-width="1.05"/>
<line x1="1292.2" y1="440.4" x2="1292.2" y2="445.5" stroke="#c8303c" stroke-width="1.05"/>
<line x1="1292.5" y1="518" x2="1292.5" y2="526.9" stroke="#c8303c" stroke-width="1.05"/>
<line x1="1292.5" y1="560" x2="1292.5" y2="564.7" stroke="#c8303c" stroke-width="1.05"/>
<line x1="1292.5" y1="615.6" x2="1292.5" y2="626.7" stroke="#c8303c" stroke-width="1.05"/>
<line x1="1292.5" y1="645.9" x2="1292.5" y2="654.8" stroke="#c8303c" stroke-width="1.05"/>
<line x1="1292.5" y1="708" x2="1292.5" y2="717" stroke="#c8303c" stroke-width="1.05"/>
<line x1="1292.5" y1="742.2" x2="1292.5" y2="746.7" stroke="#c8303c" stroke-width="1.05"/>
</g>
<rect x="376" y="979.5" width="1006" height="20" fill="#f0f0f0"/>
<rect x="398" y="980" width="914" height="19" fill="#cdcdcd"/>
<path d="M389.5 985l-4.5 4.5 4.5 4.5" stroke="#444" stroke-width="1.7" fill="none"/>
<path d="M1366.5 985l4.5 4.5-4.5 4.5" stroke="#444" stroke-width="1.7" fill="none"/>
<rect x="1384" y="96" width="536" height="934" fill="#f0f0f0"/>
<rect x="1390.5" y="97.5" width="530" height="22" fill="#dadada" stroke="#c6c6c6" stroke-width="1" class="ce"/>
<text x="1395.6" y="115.7" font-size="15" fill="#000" textLength="72" lengthAdjust="spacingAndGlyphs">Collections</text>
<g class="ce">
<rect x="1879.5" y="104.5" width="6" height="6" fill="none" stroke="#1a1a1a" stroke-width="1.3"/>
<rect x="1876.5" y="107.5" width="6" height="6" fill="#dadada" stroke="#1a1a1a" stroke-width="1.3"/>
<rect x="1877" y="108" width="5" height="1.6" fill="#1a1a1a"/>
<rect x="1880" y="105" width="5" height="1.6" fill="#1a1a1a"/>
</g>
<path d="M1901.5 105l9 8.5M1910.5 105l-9 8.5" stroke="#1a1a1a" stroke-width="1.7" fill="none"/>
<rect x="1401.5" y="133.5" width="507" height="23" fill="#ffffff" stroke="#8c8c8c" stroke-width="1" class="ce"/>
<text x="1404.2" y="149.3" font-size="13" fill="#000" textLength="41.3" lengthAdjust="spacingAndGlyphs">contact</text>
<circle cx="1891.1" cy="144.9" r="8.6" fill="#4d4d4d"/>
<path d="M1887.6 141.4l7 7M1894.6 141.4l-7 7" stroke="#fff" stroke-width="1.9" fill="none"/>
<rect x="1401.5" y="164.5" width="507" height="828" fill="#ffffff" stroke="#8c8c8c" stroke-width="1" class="ce"/>
<defs><clipPath id="tclip"><rect x="1402" y="165" width="486" height="827"/></clipPath></defs>
<g clip-path="url(#tclip)">
<rect x="1626.8" y="597.2" width="260" height="53.8" fill="#d9d9d9"/>
<path d="M1509.1 160.7l4.5 4.5 4.5-4.5" stroke="#2b2b2b" stroke-width="1.75" fill="none"/>
<path d="M1533.0 168.5V157.7h4.2l1 1.8h6v9z" stroke="#333" stroke-width="1.1" fill="none"/>
<path d="M1537.5 159.3h6.6v2.3h-6.6z" stroke="none" stroke-width="1" fill="#333"/>
<text x="1552.7" y="168.8" font-size="14.6" fill="#000" textLength="205.7" lengthAdjust="spacingAndGlyphs">Relays, contactors and contacts</text>
<path d="M1534.1 185.5l4.5 4.5 4.5-4.5" stroke="#2b2b2b" stroke-width="1.75" fill="none"/>
<path d="M1558.0 193.3V182.5h4.2l1 1.8h6v9z" stroke="#333" stroke-width="1.1" fill="none"/>
<path d="M1562.5 184.10000000000002h6.6v2.3h-6.6z" stroke="none" stroke-width="1" fill="#333"/>
<text x="1577.7" y="193.60000000000002" font-size="14.6" fill="#000" textLength="204.2" lengthAdjust="spacingAndGlyphs">Contacts with cross referencing</text>
<path d="M1559.1 210.5l4.5 4.5 4.5-4.5" stroke="#2b2b2b" stroke-width="1.75" fill="none"/>
<path d="M1583.0 218.3V207.5h4.2l1 1.8h6v9z" stroke="#333" stroke-width="1.1" fill="none"/>
<path d="M1587.5 209.10000000000002h6.6v2.3h-6.6z" stroke="none" stroke-width="1" fill="#333"/>
<text x="1602.7" y="218.60000000000002" font-size="14.6" fill="#000" textLength="113.7" lengthAdjust="spacingAndGlyphs">Delayed switches</text>
<text x="1661" y="258.5" font-size="14.6" fill="#000" textLength="219" lengthAdjust="spacingAndGlyphs">Simple contact (NC / switch-off...</text>
<path d="M1630 231.3v12h6.2" stroke="#333" stroke-width="1.2" fill="none"/>
<path d="M1636 243.5l-6.3 19.5v12" stroke="#333" stroke-width="1.2" fill="none"/>
<path d="M1621 250.5h12M1621 253h12" stroke="#333" stroke-width="1" fill="none"/>
<path d="M1616.3 246.6c3.8 0.2 5.6 2.4 5.6 5.4s-1.8 5.2-5.6 5.4" stroke="#333" stroke-width="1.1" fill="none"/>
<path d="M1534.1 289.5l4.5 4.5 4.5-4.5" stroke="#2b2b2b" stroke-width="1.75" fill="none"/>
<path d="M1558.0 297.3V286.5h4.2l1 1.8h6v9z" stroke="#333" stroke-width="1.1" fill="none"/>
<path d="M1562.5 288.1h6.6v2.3h-6.6z" stroke="none" stroke-width="1" fill="#333"/>
<text x="1577.7" y="297.6" font-size="14.6" fill="#000" textLength="57.2" lengthAdjust="spacingAndGlyphs">Contacts</text>
<text x="1636.5" y="332.9" font-size="14.6" fill="#000" textLength="244" lengthAdjust="spacingAndGlyphs">Electronic switching device with NC...</text>
<rect x="1585" y="322" width="17.5" height="9.5" fill="none" stroke="#555" stroke-width="1.2" rx="1.5"/>
<path d="M1590 326.7h4.5M1593.8 324.3v4.8M1597.5 323.8l-3.5 2.9 3.5 2.9" stroke="#333" stroke-width="1" fill="none"/>
<path d="M1603 326.7h1.5M1606 326.7h2.2M1609.6 326.7h1.5" stroke="#555" stroke-width="1" fill="none"/>
<path d="M1609.4 310v9.1h5.6M1615 319.3l-5.6 15.6v7.4" stroke="#444" stroke-width="1.1" fill="none"/>
<text x="1626.5" y="377.6" font-size="14.6" fill="#000" textLength="255.6" lengthAdjust="spacingAndGlyphs">Electronic switching device with N/O ...</text>
<rect x="1585" y="365.6" width="19.5" height="10.5" fill="none" stroke="#555" stroke-width="1.3" rx="1.5"/>
<path d="M1590.5 370.8h5M1594.8 368.3v5M1599 367.5l-4 3.3 4 3.3" stroke="#333" stroke-width="1.1" fill="none"/>
<path d="M1605 370.8h1.5M1608.5 370.8h2" stroke="#555" stroke-width="1" fill="none"/>
<path d="M1615 351.4v9.1M1610 360.5l5 19.4v10.1" stroke="#444" stroke-width="1.1" fill="none"/>
<path d="M1459.1 403.7l4.5 4.5 4.5-4.5" stroke="#2b2b2b" stroke-width="1.75" fill="none"/>
<path d="M1483.0 411.5V400.7h4.2l1 1.8h6v9z" stroke="#333" stroke-width="1.1" fill="none"/>
<path d="M1487.5 402.3h6.6v2.3h-6.6z" stroke="none" stroke-width="1" fill="#333"/>
<text x="1502.7" y="411.8" font-size="14.6" fill="#000" textLength="125.6" lengthAdjust="spacingAndGlyphs">Imported elements</text>
<path d="M1484.1 428.7l4.5 4.5 4.5-4.5" stroke="#2b2b2b" stroke-width="1.75" fill="none"/>
<path d="M1508.0 436.5V425.7h4.2l1 1.8h6v9z" stroke="#333" stroke-width="1.1" fill="none"/>
<path d="M1512.5 427.3h6.6v2.3h-6.6z" stroke="none" stroke-width="1" fill="#333"/>
<text x="1527.7" y="436.8" font-size="14.6" fill="#000" textLength="46.9" lengthAdjust="spacingAndGlyphs">Electric</text>
<path d="M1509.1 453.7l4.5 4.5 4.5-4.5" stroke="#2b2b2b" stroke-width="1.75" fill="none"/>
<path d="M1533.0 461.5V450.7h4.2l1 1.8h6v9z" stroke="#333" stroke-width="1.1" fill="none"/>
<path d="M1537.5 452.3h6.6v2.3h-6.6z" stroke="none" stroke-width="1" fill="#333"/>
<text x="1552.7" y="461.8" font-size="14.6" fill="#000" textLength="53" lengthAdjust="spacingAndGlyphs">All-pole</text>
<path d="M1534.1 478.7l4.5 4.5 4.5-4.5" stroke="#2b2b2b" stroke-width="1.75" fill="none"/>
<path d="M1558.0 486.5V475.7h4.2l1 1.8h6v9z" stroke="#333" stroke-width="1.1" fill="none"/>
<path d="M1562.5 477.3h6.6v2.3h-6.6z" stroke="none" stroke-width="1" fill="#333"/>
<text x="1577.7" y="486.8" font-size="14.6" fill="#000" textLength="205.7" lengthAdjust="spacingAndGlyphs">Relays, contactors and contacts</text>
<path d="M1559.1 503.7l4.5 4.5 4.5-4.5" stroke="#2b2b2b" stroke-width="1.75" fill="none"/>
<path d="M1583.0 511.5V500.7h4.2l1 1.8h6v9z" stroke="#333" stroke-width="1.1" fill="none"/>
<path d="M1587.5 502.3h6.6v2.3h-6.6z" stroke="none" stroke-width="1" fill="#333"/>
<text x="1602.7" y="511.8" font-size="14.6" fill="#000" textLength="204.2" lengthAdjust="spacingAndGlyphs">Contacts with cross referencing</text>
<path d="M1584.1 528.7l4.5 4.5 4.5-4.5" stroke="#2b2b2b" stroke-width="1.75" fill="none"/>
<path d="M1608.0 536.5V525.7h4.2l1 1.8h6v9z" stroke="#333" stroke-width="1.1" fill="none"/>
<path d="M1612.5 527.3h6.6v2.3h-6.6z" stroke="none" stroke-width="1" fill="#333"/>
<text x="1627.7" y="536.8" font-size="14.6" fill="#000" textLength="57.2" lengthAdjust="spacingAndGlyphs">Auxiliary</text>
<path d="M1639.8 549.7v9.6M1634.8 559.3000000000001l5 20.7v9.7" stroke="#333" stroke-width="1.2" fill="none"/>
<text x="1666" y="577.3" font-size="14.6" fill="#000" textLength="98.8" lengthAdjust="spacingAndGlyphs">Simple contact</text>
<path d="M1634.8 604v10h6.4M1640.3 614l-5.5 19.8v10.5" stroke="#3b4d6b" stroke-width="1.2" fill="none"/>
<text x="1666" y="631.1" font-size="14.6" fill="#000" textLength="132" lengthAdjust="spacingAndGlyphs">Simple contact (NC)</text>
<path d="M1634.8 658.1v11.1h6.2l14 17.1v11.6M1655 658v9.5" stroke="#333" stroke-width="1.2" fill="none"/>
<text x="1666" y="684.9" font-size="14.6" fill="#000" textLength="98.8" lengthAdjust="spacingAndGlyphs">Simple contact</text>
<path d="M1641.7 716.6v9h6.3M1648 725.6l-6.3 20v4.2" stroke="#333" stroke-width="1.2" fill="none"/>
<text x="1669.3" y="738.7" font-size="14.6" fill="#000" textLength="117.6" lengthAdjust="spacingAndGlyphs">Mirror contact NC</text>
<path d="M1409.1 769.7l4.5 4.5 4.5-4.5" stroke="#2b2b2b" stroke-width="1.75" fill="none"/>
<rect x="1431" y="764" width="14" height="13.5" fill="#3f7fd0"/>
<rect x="1431" y="764" width="14" height="3" fill="#7fb2ee"/>
<path d="M1439.5 765.5l-3.8 6h3.2l-2 5 4.6-6.5h-3.2z" stroke="none" stroke-width="1" fill="#f2c200"/>
<text x="1452.1" y="777.9" font-size="14.6" fill="#000" textLength="98" lengthAdjust="spacingAndGlyphs">QET Collection</text>
<path d="M1434.1 794.7l4.5 4.5 4.5-4.5" stroke="#2b2b2b" stroke-width="1.75" fill="none"/>
<path d="M1458.0 802.5V791.7h4.2l1 1.8h6v9z" stroke="#333" stroke-width="1.1" fill="none"/>
<path d="M1462.5 793.3h6.6v2.3h-6.6z" stroke="none" stroke-width="1" fill="#333"/>
<text x="1477.7" y="802.8" font-size="14.6" fill="#000" textLength="46.9" lengthAdjust="spacingAndGlyphs">Electric</text>
<path d="M1459.1 819.7l4.5 4.5 4.5-4.5" stroke="#2b2b2b" stroke-width="1.75" fill="none"/>
<path d="M1483.0 827.5V816.7h4.2l1 1.8h6v9z" stroke="#333" stroke-width="1.1" fill="none"/>
<path d="M1487.5 818.3h6.6v2.3h-6.6z" stroke="none" stroke-width="1" fill="#333"/>
<text x="1502.7" y="827.8" font-size="14.6" fill="#000" textLength="53" lengthAdjust="spacingAndGlyphs">All-pole</text>
<path d="M1484.1 844.7l4.5 4.5 4.5-4.5" stroke="#2b2b2b" stroke-width="1.75" fill="none"/>
<path d="M1508.0 852.5V841.7h4.2l1 1.8h6v9z" stroke="#333" stroke-width="1.1" fill="none"/>
<path d="M1512.5 843.3h6.6v2.3h-6.6z" stroke="none" stroke-width="1" fill="#333"/>
<text x="1527.7" y="852.8" font-size="14.6" fill="#000" textLength="205.7" lengthAdjust="spacingAndGlyphs">Relays, contactors and contacts</text>
<path d="M1509.1 869.7l4.5 4.5 4.5-4.5" stroke="#2b2b2b" stroke-width="1.75" fill="none"/>
<path d="M1533.0 877.5V866.7h4.2l1 1.8h6v9z" stroke="#333" stroke-width="1.1" fill="none"/>
<path d="M1537.5 868.3h6.6v2.3h-6.6z" stroke="none" stroke-width="1" fill="#333"/>
<text x="1552.7" y="877.8" font-size="14.6" fill="#000" textLength="204.2" lengthAdjust="spacingAndGlyphs">Contacts with cross referencing</text>
<path d="M1534.1 894.7l4.5 4.5 4.5-4.5" stroke="#2b2b2b" stroke-width="1.75" fill="none"/>
<path d="M1558.0 902.5V891.7h4.2l1 1.8h6v9z" stroke="#333" stroke-width="1.1" fill="none"/>
<path d="M1562.5 893.3h6.6v2.3h-6.6z" stroke="none" stroke-width="1" fill="#333"/>
<text x="1577.7" y="902.8" font-size="14.6" fill="#000" textLength="57.2" lengthAdjust="spacingAndGlyphs">Auxiliary</text>
<path d="M1589.8 915.7v9.6M1584.8 925.3000000000001l5 20.7v9.7" stroke="#333" stroke-width="1.2" fill="none"/>
<text x="1616" y="943.3" font-size="14.6" fill="#000" textLength="98.8" lengthAdjust="spacingAndGlyphs">Simple contact</text>
<path d="M1584.8 970v10h6.4M1590.3 980l-5.5 19.8v10.5" stroke="#333" stroke-width="1.2" fill="none"/>
<text x="1616" y="997.1" font-size="14.6" fill="#000" textLength="132" lengthAdjust="spacingAndGlyphs">Simple contact (NC)</text>
</g>
<rect x="1888" y="165" width="19.5" height="827" fill="#f0f0f0"/>
<rect x="1888" y="251.7" width="19" height="92.8" fill="#cdcdcd"/>
<path d="M1893 178.5l4.8-4.8 4.8 4.8" stroke="#555" stroke-width="1.4" fill="none"/>
<path d="M1893 979l4.8 4.8 4.8-4.8" stroke="#555" stroke-width="1.4" fill="none"/>
<defs><linearGradient id="tbg" x1="0" y1="0" x2="1" y2="0"><stop offset="0" stop-color="#213843"/><stop offset="0.45" stop-color="#223541"/><stop offset="0.75" stop-color="#1f2f43"/><stop offset="1" stop-color="#1b2947"/></linearGradient></defs>
<rect x="0" y="1030" width="1920" height="50" fill="url(#tbg)"/>
<path d="M20 1047.5l8.8-1.2v9h-8.8zM30.2 1046.1l10.2-1.4v10.6h-10.2zM20 1056.7h8.8v9l-8.8-1.2zM30.2 1056.7h10.2v10.6l-10.2-1.4z" stroke="none" stroke-width="1" fill="#ffffff"/>
<defs><linearGradient id="edg" x1="0" y1="0" x2="1" y2="0.35"><stop offset="0" stop-color="#2b9be8"/><stop offset="0.5" stop-color="#35c0d0"/><stop offset="1" stop-color="#63dc5a"/></linearGradient></defs>
<circle cx="94" cy="1055" r="15.3" fill="url(#edg)"/>
<path d="M78.9 1053.5c1.5-5 6-7.5 10.5-7.5 5 0 8 3.5 8 6.5-2-2.5-7-3-9.5 0.5-3 4-1 11 6 13.5 3.5 1.2 7.5 0.5 10.5-1.5-2.8 3.8-7.5 5.8-12 5.8-8.5 0-14.5-7.5-13.5-17.3z" stroke="none" stroke-width="1" fill="#1766c6"/>
<path d="M84.5 1058c-0.5-5 3-9 7.5-8.5-3 1.5-4.5 6-2 10 2.5 4.5 9 6.5 14.5 5-3 3-8.5 4.5-13 2.5-4-1.5-6.5-5-7-9z" stroke="none" stroke-width="1" fill="#0f4fa8"/>
<circle cx="93.8" cy="1054" r="3.3" fill="#213843"/>
<path d="M97 1060.5c3.5 0 8-0.5 11.5-3-0.5 3-2 6-4.5 8-3.5 0.5-6-2-7-5z" stroke="none" stroke-width="1" fill="#213843"/>
<rect x="131" y="1077" width="190" height="3" fill="#76b9ed"/>
<circle cx="154.7" cy="1045" r="4.3" fill="#7b83eb"/><circle cx="163.8" cy="1046.9" r="2.8" fill="#5059c9"/>
<path d="M160.5 1051.5h7.5v8c0 3-2 5-4.5 5h-3z" stroke="none" stroke-width="1" fill="#5059c9"/>
<path d="M148 1051.5h13.5v10c0 3.5-3 6-6.8 6s-6.7-2.5-6.7-6z" stroke="none" stroke-width="1" fill="#7b83eb"/>
<rect x="139" y="1047.2" width="14.8" height="15" fill="#4b53bc" rx="1.2"/>
<path d="M142.5 1050.8h8M146.5 1050.8v8.5" stroke="#fff" stroke-width="2" fill="none"/>
<circle cx="163.1" cy="1064" r="5.8" fill="#8cbf26" stroke="#d7e9b0" stroke-width="1"/>
<path d="M160.4 1064l2 2 3.6-3.8" stroke="#fff" stroke-width="1.5" fill="none"/>
<text x="172.7" y="1061.2" font-size="15" fill="#ffffff" textLength="138.3" lengthAdjust="spacingAndGlyphs">General (Ngk meeti...</text>
<rect x="326.5" y="1030" width="200.5" height="50" fill="#45565e"/>
<rect x="326.5" y="1077" width="200.5" height="3" fill="#76b9ed"/>
<path d="M341.3 1067.2V1042.2h11.5l1.5 1.5h13.5v23.5z" stroke="none" stroke-width="1" fill="#2c5da5"/>
<rect x="343.5" y="1046.9" width="23.5" height="6" fill="#eef2f8"/>
<path d="M341.3 1052.8h26.5v14.4h-26.5z" stroke="none" stroke-width="1" fill="#3a72c0"/>
<path d="M348.5 1055.5h3.5M355 1055.5h5M348.5 1055.5v9h3M355 1064.5h6.5v-9h-1.5" stroke="#dce8f8" stroke-width="0.9" fill="none"/>
<circle cx="353.5" cy="1055.5" r="1.4" fill="none" stroke="#dce8f8" stroke-width="0.8"/><circle cx="353.5" cy="1064.5" r="1.4" fill="none" stroke="#dce8f8" stroke-width="0.8"/>
<text x="373.8" y="1061.2" font-size="15" fill="#ffffff" textLength="87.2" lengthAdjust="spacingAndGlyphs">QElectroTech</text>
<rect x="533" y="1077" width="190.3" height="3" fill="#76b9ed"/>
<circle cx="555.6" cy="1055" r="13.6" fill="#db4437"/>
<path d="M555.6 1055L543.8 1061.8A13.6 13.6 0 0 0 561.5 1067.3z" stroke="none" stroke-width="1" fill="#0f9d58"/>
<path d="M555.6 1055L561.5 1067.3A13.6 13.6 0 0 0 569.2 1055z" stroke="none" stroke-width="1" fill="#ffcd40"/>
<path d="M555.6 1055L543.8 1061.8A13.6 13.6 0 0 1 545 1046z" stroke="none" stroke-width="1" fill="#0f9d58"/>
<path d="M555.6 1041.4A13.6 13.6 0 0 1 569.2 1055H555.6z" stroke="none" stroke-width="1" fill="#db4437"/>
<circle cx="555.6" cy="1055" r="6.3" fill="#fff"/><circle cx="555.6" cy="1055" r="5" fill="#4285f4"/>
<text x="575.3" y="1061.2" font-size="15" fill="#ffffff" textLength="135.7" lengthAdjust="spacingAndGlyphs">Protections exampl...</text>
<rect x="734" y="1077" width="189" height="3" fill="#76b9ed"/>
<ellipse cx="755" cy="1056" rx="13" ry="10.5" fill="#c8d8e8"/>
<circle cx="749" cy="1052" r="2.2" fill="#e74c3c"/><circle cx="755" cy="1049.5" r="2.2" fill="#f1c40f"/><circle cx="747" cy="1058" r="2.2" fill="#2ecc71"/><circle cx="753" cy="1061" r="2.2" fill="#3498db"/>
<path d="M768 1041l-9 22" stroke="#d4a24c" stroke-width="3" fill="none"/>
<path d="M768 1041l2 -1" stroke="#e67e22" stroke-width="3" fill="none"/>
<text x="776" y="1061.2" font-size="15" fill="#ffffff" textLength="99" lengthAdjust="spacingAndGlyphs">Untitled - Paint</text>
<path d="M1642 1059l8.2-8.2 8.2 8.2" stroke="#fff" stroke-width="1.3" fill="none"/>
<rect x="1670" y="1046" width="20" height="19" fill="#ffffff"/>
<path d="M1672.5 1048.5h5.5M1682 1048.5h5.5M1674.8 1048.8l5.3 14.2 5.3-14.2" stroke="#000" stroke-width="2.3" fill="none"/>
<path d="M1671 1051h4M1671 1055h4M1685 1051h4M1685 1055h4" stroke="#c33" stroke-width="1" fill="none"/>
<rect x="1683" y="1061" width="7" height="3" fill="#2a8a2a"/>
<rect x="1702.5" y="1050.5" width="16" height="10" fill="none" stroke="#fff" stroke-width="1.3"/>
<rect x="1719" y="1053.5" width="1.8" height="4" fill="#fff"/>
<rect x="1704.5" y="1052.5" width="12" height="6" fill="#fff"/>
<path d="M1700.5 1047v3.5M1703 1047v3.5M1699.5 1050.5h5v2.5c0 1.5-1 2.5-2.5 2.5s-2.5-1-2.5-2.5z" stroke="#fff" stroke-width="1" fill="none"/>
<path d="M1733.5 1062.5A15 15 0 0 1 1748.5 1047.5" stroke="#fff" stroke-width="1.3" fill="none"/>
<path d="M1738.0 1062.5A10.5 10.5 0 0 1 1748.5 1052.0" stroke="#fff" stroke-width="1.3" fill="none"/>
<path d="M1742.5 1062.5A6 6 0 0 1 1748.5 1056.5" stroke="#fff" stroke-width="1.3" fill="none"/>
<circle cx="1746.5" cy="1061" r="1.5" fill="#fff"/>
<path d="M1760 1051.5h3.5l5-4.5v14.5l-5-4.5h-3.5z" stroke="#fff" stroke-width="1.2" fill="none"/>
<path d="M1771 1052c1.5 1.5 1.5 4.5 0 6M1774 1049.5c2.8 3 2.8 8 0 11" stroke="#fff" stroke-width="1.1" fill="none"/>
<path d="M1777.5 1047c4 4.3 4 12.7 0 17" stroke="#9aa" stroke-width="1" fill="none"/>
<text x="1793.4" y="1061.2" font-size="15" fill="#fff" textLength="28.2" lengthAdjust="spacingAndGlyphs">ENG</text>
<text x="1858.3" y="1048.6" font-size="14.5" fill="#fff" textLength="26.5" lengthAdjust="spacingAndGlyphs">0:00</text>
<text x="1838" y="1072" font-size="15" fill="#fff" textLength="67" lengthAdjust="spacingAndGlyphs">24/7/2565</text>
<line x1="1914.5" y1="1030" x2="1914.5" y2="1080" stroke="#5b6b80" stroke-width="1" class="ce"/>
<text x="437" y="726" font-size="27.4" fill="#d9212e" textLength="1000.5" lengthAdjust="spacingAndGlyphs">The cross-reference note was so stuffed as below, Please suggest to arrange here.</text>
<rect x="688" y="748.7" width="177.5" height="98.4" fill="none" stroke="#e31c26" stroke-width="4.6"/>
<path d="M937 742L799.5 798.5" stroke="#e31c26" stroke-width="4.2" fill="none" stroke-linecap="round"/>
<path d="M800.9 770V798.5L830.5 817.5" stroke="#e31c26" stroke-width="4.2" fill="none" stroke-linecap="round" stroke-linejoin="round" fill="none"/>
</svg>
</body></html>
